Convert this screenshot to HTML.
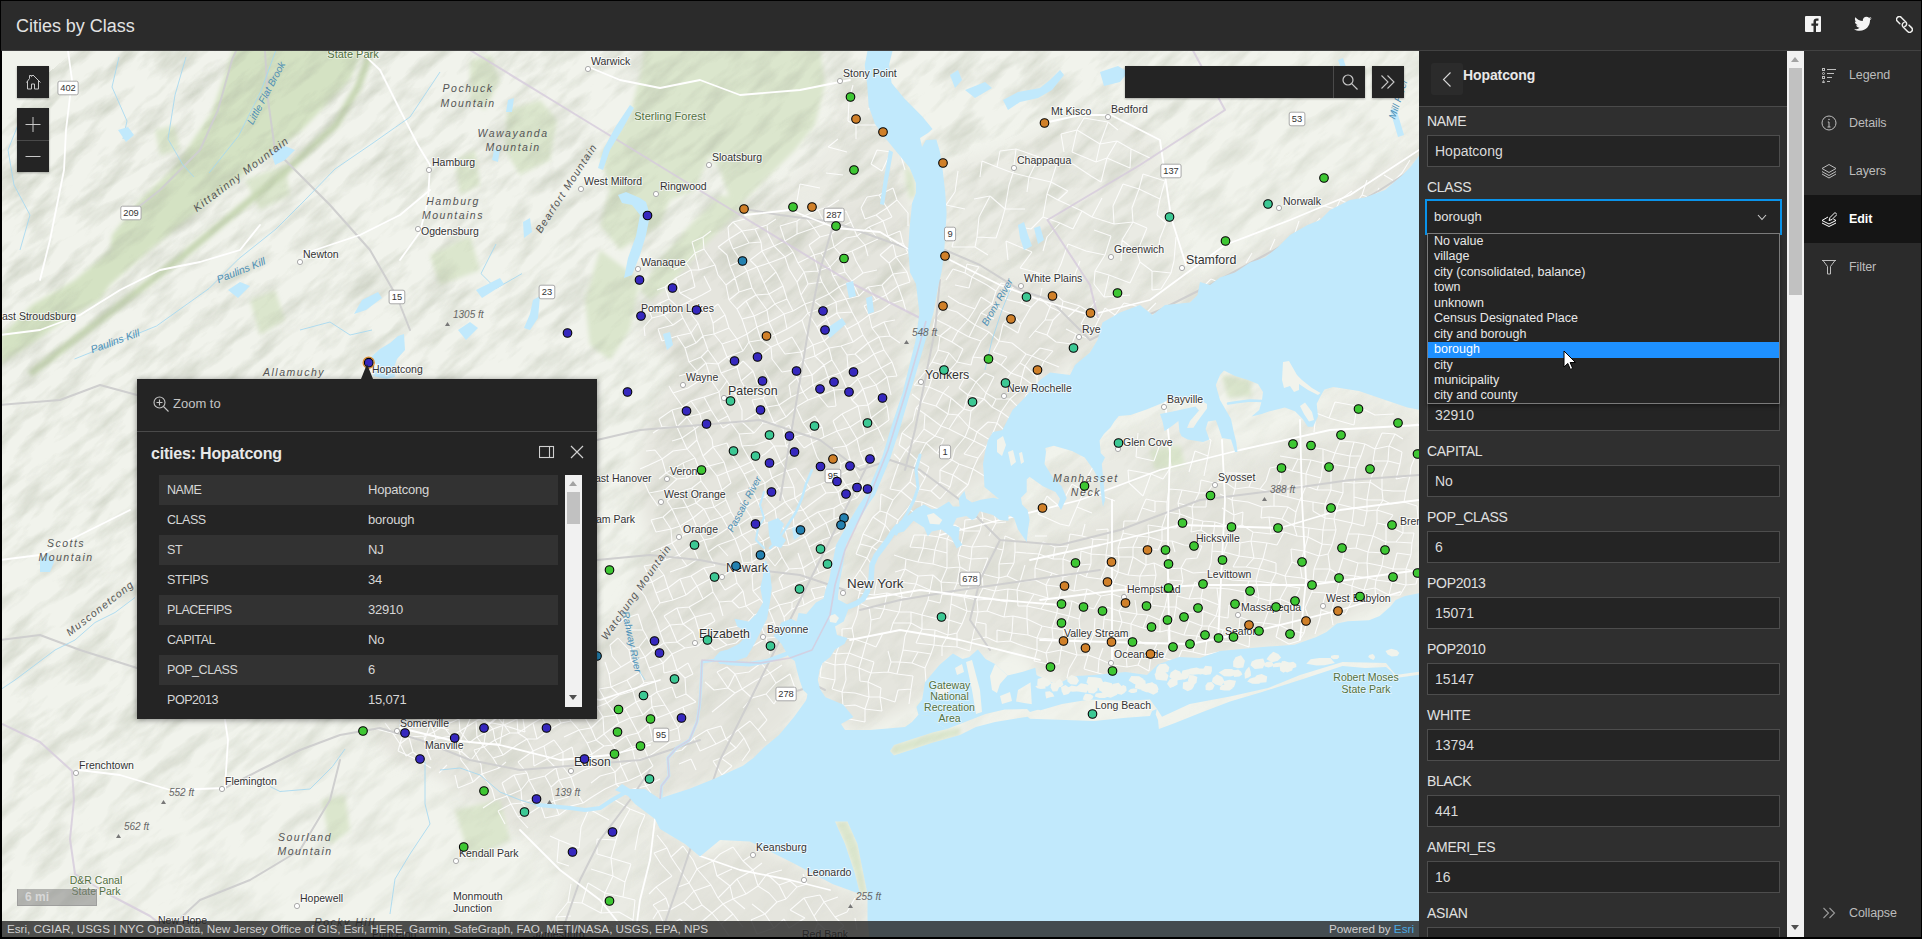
<!DOCTYPE html>
<html lang="en">
<head>
<meta charset="utf-8">
<title>Cities by Class</title>
<style>
*{box-sizing:border-box;margin:0;padding:0}
html,body{width:1922px;height:939px;overflow:hidden;background:#000}
body{font-family:"Liberation Sans",sans-serif;position:relative;color:#d6d6d6}
#app{position:absolute;left:2px;top:1px;width:1919px;height:936px;background:#2b2b2b;overflow:hidden}
#hdr{position:absolute;left:0;top:0;width:1919px;height:50px;background:#2b2b2b;border-bottom:1px solid #424242}
#hdr h1{position:absolute;left:14px;top:14px;font-size:18px;font-weight:400;color:#e3e3e3;line-height:22px;letter-spacing:-0.02px}
.hico{position:absolute;top:15px;width:16px;height:16px}
#map{position:absolute;left:0;top:50px;width:1417px;height:886px;overflow:hidden;background:#f1f3ec}
#map svg.base{position:absolute;left:0;top:0}
.mbtn{position:absolute;background:#242424;width:32px;height:32px;box-shadow:0 1px 2px rgba(0,0,0,.3)}
.mbtn svg{position:absolute;left:0;top:0}
#search{position:absolute;left:1123px;top:15px;width:240px;height:32px;background:#242424;box-shadow:0 1px 2px rgba(0,0,0,.3)}
#search .sb{position:absolute;right:0;top:0;width:32px;height:32px;border-left:1px solid #4a4a4a}
#scale{position:absolute;left:15px;top:838px;width:80px;height:17px;background:rgba(130,130,130,.55);border:1px solid rgba(150,150,150,.7);border-top:none;color:#d8d8d8;font-size:12px;font-weight:700;line-height:17px;padding-left:7px}
#attr{position:absolute;left:0;top:870px;width:1417px;height:16px;background:rgba(36,36,36,.8);color:#d1d1d1;font-size:11.7px;line-height:16px;white-space:nowrap}
#attr .l{position:absolute;left:5px;top:0;letter-spacing:-0.02px}
#attr .r{position:absolute;right:5px;top:0}
#attr .r b{font-weight:400;color:#4aa8e0}
/* popup */
#popup{position:absolute;left:135px;top:328px;width:460px;height:340px;background:#242424;box-shadow:0 1px 6px rgba(0,0,0,.45);color:#d6d6d6}
#popup .ptr{position:absolute;left:224px;top:-15px;width:0;height:0;border-left:6.2px solid transparent;border-right:6.2px solid transparent;border-bottom:15px solid #242424}
#popup .act{position:absolute;left:0;top:0;width:460px;height:53px;border-bottom:1px solid #4a4a4a;font-size:13px;color:#c4c4c4}
#popup .act span{position:absolute;left:36px;top:17px;line-height:16px}
#popup h2{position:absolute;left:14px;top:65px;font-size:16px;line-height:20px;color:#e8e8e8;font-weight:700;letter-spacing:-0.2px}
#ptab{position:absolute;left:22px;top:96px;width:399px;height:232px;overflow:hidden;font-size:13px}
#ptab div{height:30px;line-height:30px;position:relative;white-space:nowrap}
#ptab div:nth-child(odd){background:#323232}
#ptab div i{font-style:normal;position:absolute;left:8px;font-size:12.5px;letter-spacing:-.45px}
#ptab div u{text-decoration:none;position:absolute;left:209px;letter-spacing:-.2px}
#psb{position:absolute;left:428px;top:96px;width:17px;height:232px;background:#f1f1f1}
#psb .th{position:absolute;left:2px;top:17px;width:13px;height:32px;background:#c1c1c1}
.arr{position:absolute;left:4px;width:0;height:0;border-left:4.5px solid transparent;border-right:4.5px solid transparent}
.arr.up{border-bottom:5px solid #a3a3a3}
.arr.dn{border-top:5px solid #505050}
/* panel */
#panel{position:absolute;left:1417px;top:50px;width:368px;height:886px;background:#2f2f2f;overflow:hidden}
#phead{position:absolute;left:0;top:0;width:368px;height:56px;background:#242424;border-bottom:1px solid #4a4a4a}
#back{position:absolute;left:12px;top:12px;width:32px;height:32px;background:#2b2b2b;border-radius:3px}
#phead b{position:absolute;left:44px;top:15px;font-size:14px;line-height:18px;color:#e8e8e8;letter-spacing:-0.1px}
.fl{position:absolute;left:8px;font-size:14px;line-height:16px;color:#e0e0e0;letter-spacing:-0.3px}
.fi{position:absolute;left:8px;width:353px;height:32px;background:#242424;border:1px solid #4d4d4d;font-size:14px;line-height:30px;padding-left:7px;color:#dadada}
#sel{position:absolute;left:6px;top:148px;width:357px;height:36px;border:2px solid #0a93ea;background:#242424}
#sel span{position:absolute;left:7px;top:8px;font-size:13px;line-height:16px;color:#e4e4e4}
#dd{position:absolute;left:8px;top:182px;width:353px;height:171px;background:#242424;border:1px solid #7a7a7a;font-size:12.5px;color:#e8e8e8;box-shadow:0 2px 4px rgba(0,0,0,.4)}
#dd div{height:15.45px;line-height:15.45px;padding-left:6px;white-space:nowrap}
#dd div.hl{background:#1e90ff;color:#fff}
#vsb{position:absolute;left:1785px;top:50px;width:17px;height:886px;background:#f1f1f1}
#vsb .th{position:absolute;left:2px;top:17px;width:13px;height:227px;background:#c1c1c1}
/* nav */
#nav{position:absolute;left:1802px;top:50px;width:117px;height:886px;background:#2b2b2b;font-size:12.5px;color:#bdbdbd}
.ni{position:absolute;left:0;width:117px;height:48px}
.ni span{position:absolute;left:45px;top:16px;line-height:16px;letter-spacing:-0.1px}
.ni svg{position:absolute;left:17px;top:16px}
.ni.on{background:#151515;color:#fff;font-weight:700}
#cursor{position:absolute;left:1561px;top:349px}
</style>
</head>
<body>
<div style="position:absolute;left:1px;top:1px;width:1px;height:50px;background:#2b2b2b"></div>
<div id="app">
<div id="hdr"><h1>Cities by Class</h1>
<svg class="hico" style="left:1803px" viewBox="0 0 16 16"><rect width="16" height="16" rx="1" fill="#f4f4f4"/><path d="M11 16V9.8h2l.3-2.4H11V5.9c0-.7.2-1.2 1.2-1.2h1.3V2.6c-.2 0-1-.1-1.9-.1-1.9 0-3.1 1.1-3.1 3.2v1.7H6.4v2.4h2.1V16z" fill="#2b2b2b"/></svg>
<svg class="hico" style="left:1852px;width:18px" viewBox="0 0 18 16"><path d="M17.8 2.3c-.7.3-1.4.5-2.1.6.8-.5 1.3-1.2 1.6-2-.7.4-1.5.7-2.3.9C14.3 1.1 13.4.7 12.4.7c-2 0-3.6 1.6-3.6 3.6 0 .3 0 .6.1.8C5.9 5 3.2 3.5 1.4 1.3c-.3.5-.5 1.2-.5 1.8 0 1.3.6 2.4 1.6 3-.6 0-1.2-.2-1.6-.5 0 1.8 1.2 3.2 2.9 3.6-.3.1-.6.1-1 .1-.2 0-.5 0-.7-.1.5 1.4 1.8 2.5 3.4 2.5-1.2 1-2.8 1.6-4.5 1.6-.3 0-.6 0-.9-.1 1.6 1 3.5 1.6 5.6 1.6 6.7 0 10.3-5.5 10.3-10.3v-.5c.7-.5 1.3-1.1 1.8-1.7z" fill="#f4f4f4"/></svg>
<svg class="hico" style="left:1894px;top:15px;width:17px;height:17px" viewBox="0 0 17 17" fill="none" stroke="#f0f0ee" stroke-width="1.45" stroke-linecap="round"><g transform="translate(5.6 5.6) rotate(45)"><path d="M.3 2.75H-3.2A2.75 2.75 0 0 1-3.2-2.75H3.2A2.75 2.75 0 0 1 5.7 1.2"/></g><g transform="translate(11.3 11.3) rotate(45)"><path d="M-.3-2.75H3.2A2.75 2.75 0 0 1 3.2 2.75H-3.2A2.75 2.75 0 0 1-5.7-1.2"/></g></svg>
</div>
<div id="map">
<svg class="base" width="1417" height="886" viewBox="0 0 1417 886" font-family="Liberation Sans, sans-serif">
<rect width="1417" height="886" fill="#f1f3ec"/>
<defs><filter id="bl" x="-10%" y="-10%" width="120%" height="120%"><feGaussianBlur stdDeviation="7"/></filter><filter id="bg" x="-10%" y="-10%" width="120%" height="120%"><feGaussianBlur stdDeviation="2.2"/></filter><filter id="hs" x="0" y="0" width="100%" height="100%"><feTurbulence type="fractalNoise" baseFrequency=".02 .07" numOctaves="4" seed="11"/><feColorMatrix type="matrix" values="0 0 0 0 .42 0 0 0 0 .46 0 0 0 0 .36 1.1 0 0 0 -.47"/></filter><linearGradient id="fg" x1="0" y1="0" x2="1" y2="1"><stop offset="0" stop-color="#fff"/><stop offset=".45" stop-color="#fff" stop-opacity=".75"/><stop offset=".75" stop-color="#fff" stop-opacity=".15"/><stop offset="1" stop-color="#fff" stop-opacity=".1"/></linearGradient><mask id="fm"><rect width="1417" height="886" fill="url(#fg)"/></mask></defs>
<g fill="#e5e5de" filter="url(#bl)"><polygon points="698,174 758,164 828,149 903,129 910,179 910,249 898,339 878,404 848,479 828,549 798,561 784,601 738,609 700,609 697,653 694,671 686,689 674,697 665,707 666,725 658,735 658,749 598,749 558,764 518,784 478,759 438,724 388,704 368,674 418,664 478,664 558,649 595,639 598,589 628,549 648,489 634,429 648,369 678,314 638,284 648,244 678,211"/><polygon points="943,199 973,211 998,224 1043,231 1098,249 1188,237 1258,197 1328,147 1417,97 1417,121 1348,164 1288,194 1208,244 1108,279 1038,339 988,429 898,484 858,549 841,546 863,469 898,379 923,289 938,234"/><polygon points="843,549 898,489 988,449 1028,494 1108,461 1178,433 1258,411 1338,381 1417,371 1417,541 1378,551 1298,591 1188,611 1098,636 1038,621 1018,599 988,599 948,604 913,654 858,679 838,674 818,639 818,609 848,564"/><polygon points="702,611 787,606 798,639 792,666 761,697 741,715 713,727 688,738 662,746 667,725 666,707 675,697 688,689 695,671 698,653 699,633"/><polygon points="653,768 698,805 748,791 830,833 864,849 866,886 638,886 646,819"/></g>
<g fill="#e5e5de" opacity=".55" filter="url(#bl)"><polygon points="1028,494 1043,419 1098,399 1158,364 1238,399 1298,374 1338,341 1417,361 1417,371 1338,381 1258,411 1178,433 1108,461"/><polygon points="943,114 998,99 1058,69 1118,59 1158,89 1173,169 1188,237 1098,249 1043,231 998,224 943,199"/><polygon points="743,164 828,149 903,129 903,69 866,39 838,29 828,89 798,119"/><polygon points="368,674 418,664 478,664 558,649 595,639 595,669 518,689 438,724 388,704"/><polygon points="518,784 558,764 598,749 658,749 653,768 646,819 638,886 538,886 558,829"/></g>
<g fill="#dbe6cd" filter="url(#bg)"><polygon points="643,-6 818,-6 823,34 813,74 793,99 743,149 728,149 718,119 708,104 693,139 668,149 658,174 618,199 598,174 608,139 598,104 628,64 638,24"/><polygon points="743,149 733,164 698,199 668,234 648,249 638,239 658,209 688,174 718,144"/><polygon points="505,59 538,49 555,69 548,109 518,124 503,99"/><polygon points="468,9 488,4 498,29 483,59 468,49"/><polygon points="453,109 473,99 478,134 458,144"/><polygon points="428,204 468,184 478,219 438,234"/><polygon points="248,249 273,239 283,269 258,284"/><polygon points="153,79 173,74 178,99 158,104"/><polygon points="243,129 283,114 288,144 258,159"/><polygon points="598,199 638,229 628,279 608,309 588,294 583,249"/><polygon points="903,114 912,124 914,144 908,149 904,134"/><polygon points="928,239 934,241 923,289 916,287"/><polygon points="320,749 343,744 348,779 328,794"/><polygon points="453,759 498,749 508,789 468,809"/><polygon points="1128,329 1153,319 1163,344 1138,354"/><polygon points="1220,324 1248,329 1250,345 1226,347"/><polygon points="1148,399 1178,394 1183,414 1153,419"/><polygon points="915,655 923,649 935,661 934,673 924,671"/><polygon points="892,694 930.4,681.5 958,676 958,684 930.4,691.7 892,704.5 888,700"/><polygon points="833,770 845.5,770 855.5,793 860.5,818 865,843 858,843 853,823 843,793"/></g>
<polygon points="-2,286 30,254 73,229 108,199 110,184 138,149 173,116 210,61 223,24 233,-6 273,-6 363,-6 358,6 348,29 298,81 248,119 198,159 148,199 108,234 98,249 60,271 28,294 -2,314" fill="#d4e2c3" filter="url(#bg)"/>
<polyline points="28,323 46.5,308.7 110,260 177,208 222,170.6 281.6,122 334,73.6 356,36 371,-6" fill="none" stroke="#c6d6b2" stroke-width="7" filter="url(#bg)"/>
<g mask="url(#fm)"><rect x="-600" y="-300" width="2400" height="1800" filter="url(#hs)" transform="rotate(-40 700 440)"/></g>
<path d="M383 672L392 684M392 684L399 681M392 684L398 693M398 693L407 686M398 693L404 705M404 705L411 701M399 681L416 673M407 686L422 685M407 686L411 701M411 701L422 710M416 673L425 666M422 685L432 681M422 685L423 694M423 694L434 688M423 694L429 709M437 722L445 714M425 666L432 681M432 681L441 675M432 681L434 688M434 688L449 685M443 698L456 693M453 724L456 737M456 737L471 731M441 675L457 668M441 675L449 685M449 685L458 680M456 693L459 709M459 709L466 718M466 718L471 731M471 731L480 723M481 757L493 749M457 668L458 680M458 680L474 670M458 680L467 692M467 692L475 686M472 699L482 696M472 699L479 714M479 714L480 723M480 723L497 717M480 723L490 738M490 738L493 749M493 749L505 745M496 760L509 753M496 760L503 773M474 670L481 667M474 670L475 686M475 686L491 678M475 686L482 696M482 696L493 689M482 696L491 707M491 707L501 704M491 707L497 717M497 717L504 711M500 732L512 724M500 732L505 745M505 745L519 739M505 745L509 753M509 753L520 752M509 753L516 766M516 766L528 762M516 766L526 777M481 667L492 662M481 667L491 678M491 678L502 674M491 678L493 689M493 689L508 682M493 689L501 704M501 704L515 694M512 724L525 722M512 724L519 739M519 739L527 729M519 739L520 752M520 752L536 746M520 752L528 762M528 762L539 755M492 662L502 674M502 674L515 668M502 674L508 682M508 682L516 682M515 694L525 688M516 711L531 700M516 711L525 722M525 722L527 729M527 729L543 725M527 729L536 746M536 746L539 755M539 755L552 750M539 755L543 767M543 767L557 764M515 668L523 659M515 668L516 682M516 682L531 672M516 682L525 688M525 688L535 688M525 688L531 700M531 700L542 695M531 700L532 715M532 715L545 708M543 725L554 717M543 725L549 736M549 736L557 729M549 736L552 750M552 750L566 746M552 750L557 764M557 764L569 755M523 659L535 654M531 672L540 667M531 672L535 688M535 688L547 679M542 695L552 689M542 695L545 708M545 708L561 701M545 708L554 717M554 717L561 716M554 717L557 729M557 729L569 726M557 729L566 746M566 746L573 738M569 755L581 752M535 654L544 652M535 654L540 667M540 667L547 679M547 679L559 672M552 689L561 701M561 701L570 696M561 701L561 716M561 716L569 726M569 726L580 720M569 726L573 738M573 738L581 752M581 752L590 746M544 652L555 665M555 665L562 656M555 665L559 672M559 672L569 670M562 686L577 679M570 696L573 709M573 709L590 703M580 720L590 716M589 732L598 725M590 746L603 738M562 656L573 649M562 656L569 670M569 670L577 679M577 679L589 677M577 679L585 692M585 692L594 689M585 692L590 703M590 703L602 695M590 703L590 716M590 716L604 710M598 725L613 721M603 738L614 733M573 649L582 665M582 665L595 656M582 665L589 677M589 677L601 666M589 677L594 689M594 689L602 683M594 689L602 695M602 695L611 694M604 710L616 703M604 710L613 721M613 721L619 715M613 721L614 733M614 733L626 730M614 733L624 743M624 743L631 738M590 644L595 656M595 656L605 652M595 656L601 666M601 666L614 664M601 666L602 683M602 683L617 672M602 683L611 694M611 694L624 685M611 694L616 703M616 703L630 696M616 703L619 715M619 715L633 709M619 715L626 730M626 730L639 724M631 738L644 735M597 638L609 636M597 638L605 652M605 652L617 644M605 652L614 664M614 664L623 658M614 664L617 672M617 672L628 667M624 685L636 682M624 685L630 696M630 696L641 694M630 696L633 709M633 709L646 706M633 709L639 724M639 724L651 715M639 724L644 735M644 735L658 728M644 735L649 742M603 611L607 623M607 623L619 616M607 623L609 636M609 636L625 629M609 636L617 644M617 644L631 640M623 658L634 651M623 658L628 667M628 667L641 664M628 667L636 682M636 682L647 673M636 682L641 694M641 694L651 690M641 694L646 706M646 706L656 699M646 706L651 715M608 594L616 587M608 594L610 605M610 605L619 616M619 616L629 610M625 629L638 621M625 629L631 640M631 640L642 632M631 640L634 651M634 651L649 645M634 651L641 664M641 664L650 656M647 673L655 667M647 673L651 690M656 699L668 691M612 576L622 568M616 587L627 599M627 599L637 596M627 599L629 610M629 610L643 606M629 610L638 621M638 621L642 632M642 632L653 630M649 645L655 641M649 645L650 656M650 656L663 654M650 656L655 667M655 667L668 662M664 681L676 677M668 691L678 689M622 568L636 563M622 568L629 579M629 579L641 579M637 596L645 586M637 596L643 606M643 606L651 599M643 606L647 617M647 617L661 612M647 617L653 630M653 630L655 641M655 641L670 636M655 641L663 654M663 654L668 662M668 662L681 656M668 662L676 677M676 677L684 667M676 677L678 689M636 563L641 579M641 579L645 586M645 586L651 599M651 599L662 592M651 599L661 612M661 612L670 603M661 612L662 622M662 622L675 619M670 636L674 647M674 647L684 643M681 656L694 651M681 656L684 667M635 535L650 531M635 535L643 545M643 545L650 561M650 561L658 552M650 561L654 569M654 569L658 581M658 581L668 574M658 581L662 592M662 592L675 591M662 592L670 603M670 603L683 597M670 603L675 619M675 619L686 612M675 619L683 627M683 627L691 623M683 627L684 643M684 643L694 651M642 515L653 513M642 515L650 531M650 531L662 524M650 531L654 542M654 542L666 537M654 542L658 552M658 552L671 549M662 565L675 557M662 565L668 574M668 574L681 573M668 574L675 591M675 591L691 581M675 591L683 597M683 597L696 595M686 612L691 623M649 501L659 497M653 513L664 509M653 513L662 524M662 524L666 537M666 537L678 528M666 537L671 549M671 549L684 544M675 557L687 556M675 557L681 573M681 573L693 566M681 573L691 581M691 581L696 595M696 595L702 589M649 469L661 466M649 469L654 481M654 481L669 478M659 497L670 492M659 497L664 509M664 509L677 504M668 521L685 515M678 528L689 525M678 528L684 544M684 544L695 535M687 556L701 548M687 556L693 566M693 566L709 562M693 566L697 580M697 580L713 570M697 580L702 589M702 589L715 586M702 589L713 599M713 599L725 594M638 418L647 414M641 428L647 442M647 442L663 439M647 442L656 455M661 466L670 458M661 466L669 478M669 478L678 475M669 478L670 492M670 492L682 484M670 492L677 504M677 504L690 494M677 504L685 515M685 515L696 508M689 525L702 517M689 525L695 535M695 535L708 528M695 535L701 548M701 548L711 541M709 562L713 570M715 586L727 577M715 586L725 594M725 594L734 592M731 606L742 600M644 400L653 399M647 414L660 408M657 428L664 422M663 439L675 428M665 450L677 441M665 450L670 458M670 458L685 456M670 458L678 475M678 475L691 467M678 475L682 484M682 484L696 479M690 494L702 489M690 494L696 508M702 517L713 515M702 517L708 528M708 528L716 528M708 528L711 541M711 541L717 551M717 551L730 550M717 551L721 565M727 577L743 574M734 592L746 581M651 382L660 376M653 399L660 408M660 408L671 400M660 408L664 422M664 422L681 412M664 422L675 428M675 428L685 427M677 441L690 437M677 441L685 456M685 456L694 452M685 456L691 467M691 467L702 458M691 467L696 479M696 479L708 470M696 479L702 489M702 489L711 487M702 489L706 501M706 501L716 494M706 501L713 515M716 528L732 518M716 528L723 539M723 539L735 532M730 550L741 540M730 550L737 557M737 557L744 555M743 574L752 564M743 574L746 581M746 581L759 575M746 581L751 595M751 595L764 587M657 368L670 359M657 368L660 376M660 376L675 376M670 390L680 387M671 400L685 398M681 412L693 407M681 412L685 427M685 427L697 418M690 437L699 430M690 437L694 452M694 452L707 441M694 452L702 458M702 458L712 456M702 458L708 470M708 470L720 466M711 487L726 477M716 494L733 488M716 494L726 505M732 518L741 512M732 518L735 532M735 532L741 540M741 540L744 555M744 555L758 548M744 555L752 564M752 564L767 559M759 575L772 571M759 575L764 587M764 587L777 586M764 587L768 603M670 359L681 356M670 359L675 376M675 376L685 366M675 376L680 387M680 387L693 378M680 387L685 398M685 398L695 389M685 398L693 407M693 407L697 418M697 418L707 415M697 418L699 430M699 430L707 441M707 441L720 439M707 441L712 456M712 456L724 449M712 456L720 466M720 466L729 461M720 466L726 477M726 477L737 474M726 477L733 488M733 488L740 484M733 488L738 501M738 501L749 494M738 501L741 512M741 512L750 511M750 524L756 518M750 524L751 540M751 540L761 534M751 540L758 548M758 548L767 559M767 559L777 554M767 559L772 571M772 571L777 586M777 586L784 580M642 276L650 267M642 276L643 285M667 335L671 342M671 342L686 337M671 342L681 356M681 356L689 350M681 356L685 366M685 366L698 363M685 366L693 378M693 378L700 372M693 378L695 389M695 389L701 405M701 405L711 396M701 405L707 415M707 415L722 411M707 415L715 425M715 425L725 421M715 425L720 439M720 439L729 432M720 439L724 449M724 449L729 461M729 461L737 474M737 474L749 466M737 474L740 484M740 484L752 478M740 484L749 494M749 494L761 490M749 494L750 511M750 511L763 503M750 511L756 518M770 542L781 538M770 542L777 554M777 554L790 551M777 554L782 566M782 566L790 558M782 566L784 580M647 259L658 252M647 259L650 267M650 267L662 264M656 278L671 274M656 278L660 290M660 290L675 285M677 325L695 320M686 337L697 330M689 350L702 346M689 350L698 363M698 363L709 359M698 363L700 372M700 372L710 388M710 388L711 396M711 396L725 392M711 396L722 411M722 411L725 421M725 421L738 416M725 421L729 432M735 442L749 437M735 442L743 457M743 457L755 449M743 457L749 466M749 466L762 465M749 466L752 478M752 478L763 472M752 478L761 490M761 490L771 484M761 490L763 503M763 503L775 495M763 503L773 515M773 515L780 506M777 527L787 518M777 527L781 538M781 538L792 533M790 551L800 545M790 551L790 558M790 558L802 554M655 239L663 236M658 252L667 248M658 252L662 264M662 264L676 256M662 264L671 274M671 274L681 267M675 285L689 282M675 285L683 297M683 297L694 292M683 297L687 311M687 311L699 306M687 311L695 320M695 320L704 312M695 320L697 330M697 330L709 329M702 346L717 341M702 346L709 359M709 359L716 370M716 370L726 365M716 370L721 377M721 377L729 372M725 392L729 403M729 403L738 416M738 416L749 411M738 416L742 423M742 423L753 418M742 423L749 437M749 437L763 432M749 437L755 449M755 449L763 446M755 449L762 465M762 465L773 458M762 465L763 472M763 472L775 471M771 484L775 495M775 495L787 494M775 495L780 506M780 506L787 518M787 518L801 517M792 533L804 529M792 533L800 545M800 545L802 554M802 554L813 548M663 236L674 227M663 236L667 248M667 248L676 256M676 256L690 249M676 256L681 267M681 267L689 282M689 282L696 272M689 282L694 292M694 292L701 285M699 306L706 299M699 306L704 312M704 312L716 313M704 312L709 329M709 329L717 341M717 341L725 330M717 341L719 353M719 353L726 365M726 365L729 372M729 372L740 371M729 372L737 383M737 383L752 382M737 383L740 395M740 395L753 394M740 395L749 411M749 411L763 403M749 411L753 418M753 418L763 432M763 432L770 427M763 432L763 446M763 446L777 437M763 446L773 458M773 458L783 451M773 458L775 471M775 471L791 461M775 471L783 479M783 479L792 476M783 479L787 494M787 494L803 486M796 502L801 517M801 517L812 510M801 517L804 529M804 529L817 522M809 538L823 535M809 538L813 548M813 548L827 544M672 219L684 212M674 227L689 219M674 227L678 242M678 242L693 236M678 242L690 249M690 249L700 244M689 263L707 260M689 263L696 272M696 272L701 285M701 285L712 283M701 285L706 299M706 299L716 313M716 313L725 306M716 313L719 322M719 322L735 316M719 322L725 330M725 330L733 343M733 343L745 340M733 343L740 359M740 359L740 371M740 371L755 362M740 371L752 382M752 382L761 372M753 394L767 389M763 403L772 395M767 417L779 411M767 417L770 427M770 427L785 420M770 427L777 437M777 437L792 436M777 437L783 451M783 451L793 447M783 451L791 461M791 461L801 459M791 461L792 476M792 476L806 467M792 476L803 486M803 486L813 478M803 486L807 496M807 496L820 489M807 496L812 510M812 510L822 503M812 510L817 522M817 522L832 516M823 535L827 544M684 212L693 202M684 212L689 219M689 219L697 219M689 219L693 236M700 244L709 239M707 260L716 253M707 260L711 272M711 272L723 264M711 272L712 283M712 283L727 277M712 283L720 293M720 293L735 288M720 293L725 306M725 306L741 300M725 306L735 316M735 316L741 310M735 316L739 330M739 330L751 320M739 330L745 340M750 349L761 347M750 349L755 362M755 362L765 356M755 362L761 372M761 372L772 372M767 389L772 395M772 395L784 395M772 395L779 411M779 411L791 401M779 411L785 420M785 420L794 417M785 420L792 436M792 436L793 447M793 447L808 437M793 447L801 459M801 459L813 450M801 459L806 467M806 467L816 461M806 467L813 478M813 478L824 472M820 489L829 486M820 489L822 503M822 503L836 495M832 516L838 509M690 191L701 186M690 191L693 202M693 202L702 198M693 202L697 219M697 219L713 214M702 225L709 239M716 253L723 264M723 264L727 277M727 277L735 288M735 288L745 283M735 288L741 300M741 300L747 291M741 310L751 320M751 320L756 334M761 347L770 338M761 347L765 356M765 356L777 354M765 356L772 372M772 372L784 366M772 372L781 378M781 378L787 374M781 378L784 395M784 395L793 386M784 395L791 401M794 417L803 430M803 430L808 437M808 437L819 433M813 450L824 442M816 461L832 457M816 461L824 472M824 472L832 468M824 472L829 486M829 486L838 481M836 495L838 509M701 186L709 180M701 186L702 198M702 198L713 214M713 214L716 224M716 224L724 234M724 234L733 227M724 234L727 249M727 249L737 241M727 249L735 258M735 258L744 250M735 258L740 268M740 268L752 265M740 268L745 283M745 283L755 276M745 283L747 291M747 291L759 289M747 291L755 307M755 307L769 296M762 319L768 330M768 330L770 338M770 338L777 354M777 354L789 346M777 354L784 366M784 366L794 356M787 374L793 386M793 386L808 382M793 386L802 397M802 397L810 392M815 419L823 418M819 433L828 429M819 433L824 442M824 442L836 441M832 457L839 453M832 457L832 468M832 468L846 463M716 196L727 188M716 196L725 204M725 204L728 215M728 215L739 210M728 215L733 227M733 227L745 220M733 227L737 241M737 241L750 237M744 250L754 244M744 250L752 265M752 265L765 259M752 265L755 276M755 276L767 271M755 276L759 289M759 289L773 284M759 289L769 296M769 296L776 293M769 296L770 308M770 308L780 321M780 321L792 319M787 334L795 327M787 334L789 346M789 346L801 341M794 356L806 349M794 356L801 372M801 372L813 365M801 372L808 382M808 382L820 376M808 382L810 392M810 392L822 386M810 392L815 406M815 406L823 418M823 418L828 429M828 429L838 424M828 429L836 441M836 441L844 434M836 441L839 453M839 453L855 447M839 453L846 463M726 176L731 171M726 176L727 188M727 188L740 180M727 188L731 198M731 198L747 192M731 198L739 210M739 210L745 220M745 220L755 216M745 220L750 237M750 237L754 244M754 244L767 243M754 244L765 259M765 259L773 253M765 259L767 271M767 271L782 263M767 271L773 284M773 284L785 278M773 284L776 293M776 293L790 286M776 293L783 303M783 303L799 301M792 319L801 309M792 319L795 327M795 327L810 324M795 327L801 341M801 341L811 334M801 341L806 349M806 349L817 345M813 365L820 376M820 376L822 386M822 386L835 380M831 397L844 395M831 397L839 413M839 413L848 408M839 413L838 424M838 424L852 417M838 424L844 434M844 434L859 430M844 434L855 447M855 447L861 438M731 171L743 168M731 171L740 180M740 180L753 178M740 180L747 192M747 192L759 191M748 209L760 200M748 209L755 216M755 216L767 212M755 216L762 232M762 232L774 221M762 232L767 243M767 243L781 235M767 243L773 253M773 253L785 248M773 253L782 263M782 263L791 260M782 263L785 278M785 278L800 269M790 286L799 301M799 301L811 294M799 301L801 309M801 309L813 305M801 309L810 324M810 324L822 314M810 324L811 334M811 334L826 326M811 334L817 345M817 345L832 339M817 345L826 356M826 356L834 355M831 370L840 363M831 370L835 380M835 380L848 376M835 380L844 395M844 395L855 388M844 395L848 408M848 408L852 417M852 417L863 413M852 417L859 430M859 430L861 438M753 178L765 174M753 178L759 191M759 191L760 200M760 200L772 195M760 200L767 212M767 212L783 206M767 212L774 221M774 221L781 235M781 235L785 248M785 248L791 260M791 260L803 253M800 269L806 262M800 269L805 284M805 284L811 294M811 294L822 290M811 294L813 305M813 305L827 297M813 305L822 314M822 314L830 309M822 314L826 326M826 326L838 322M826 326L832 339M832 339L845 338M832 339L834 355M840 363L856 355M840 363L848 376M848 376L859 369M848 376L855 388M855 388L863 383M855 388L858 401M858 401L870 396M858 401L863 413M863 413L874 406M765 174L774 168M765 174L766 183M766 183L772 195M772 195L783 190M772 195L783 206M783 206L791 201M783 206L787 218M787 218L795 231M795 231L802 221M795 231L799 244M799 244L806 233M799 244L803 253M803 253L812 250M803 253L806 262M806 262L821 257M806 262L815 276M815 276L825 268M815 276L822 290M822 290L831 282M822 290L827 297M827 297L839 295M827 297L830 309M830 309L838 322M838 322L846 317M838 322L845 338M845 338L856 328M845 338L850 349M850 349L861 338M850 349L856 355M856 355L866 354M856 355L859 369M859 369L863 383M863 383L876 377M870 396L874 406M778 175L795 170M778 175L783 190M783 190L795 183M783 190L791 201M791 201L796 212M796 212L812 204M796 212L802 221M802 221L816 220M802 221L806 233M806 233L820 231M812 250L827 243M812 250L821 257M821 257L834 251M821 257L825 268M825 268L835 262M825 268L831 282M839 295L851 291M839 295L845 304M845 304L853 303M845 304L846 317M846 317L861 311M846 317L856 328M856 328L866 324M856 328L861 338M861 338L874 334M861 338L866 354M866 354L878 344M866 354L869 367M869 367L885 355M869 367L876 377M876 377L887 369M876 377L882 390M795 170L802 165M795 170L795 183M795 183L812 177M807 194L818 186M807 194L812 204M812 204L819 202M812 204L816 220M816 220L828 216M816 220L820 231M820 231L827 243M827 243L837 236M827 243L834 251M834 251L844 248M834 251L835 262M835 262L850 261M835 262L845 278M845 278L856 272M845 278L851 291M851 291L861 284M853 303L866 292M853 303L861 311M861 311L872 303M866 324L879 317M866 324L874 334M874 334L885 326M874 334L878 344M878 344L885 355M885 355L887 369M802 165L816 159M802 165L812 177M812 177L823 173M812 177L818 186M818 186L829 183M819 202L832 196M819 202L828 216M828 216L839 204M828 216L831 225M831 225L843 221M831 225L837 236M837 236L850 230M837 236L844 248M844 248L857 245M844 248L850 261M850 261L856 272M856 272L867 264M856 272L861 284M861 284L866 292M866 292L877 286M866 292L872 303M872 303L882 299M872 303L879 317M879 317L890 311M879 317L885 326M885 326L895 325M885 326L889 344M816 159L826 156M816 159L823 173M823 173L832 164M829 183L839 176M829 183L832 196M832 196L844 187M832 196L839 204M839 204L850 200M839 204L843 221M843 221L850 230M850 230L861 222M850 230L857 245M857 245L866 236M862 255L874 249M862 255L867 264M867 264L880 259M867 264L870 277M870 277L882 271M870 277L877 286M877 286L888 285M877 286L882 299M882 299L890 311M890 311L895 325M826 156L837 149M832 164L844 160M832 164L839 176M839 176L849 171M844 187L855 185M850 200L863 194M850 200L854 210M854 210L861 222M861 222L875 219M866 236L880 234M866 236L874 249M874 249L884 244M880 259L888 253M882 271L893 269M882 271L888 285M888 285L898 292M844 160L849 171M849 171L855 185M855 185L867 176M855 185L863 194M863 194L876 188M863 194L866 205M880 234L891 223M880 234L884 244M884 244L896 235M884 244L888 253M888 253L901 249M859 157L865 146M859 157L863 168M863 168L874 164M867 176L881 170M867 176L876 188M878 204L891 193M878 204L887 212M887 212L894 206M887 212L891 223M891 223L905 221M891 223L896 235M896 235L908 231M896 235L901 249M901 249L904 260M865 146L877 144M874 164L885 157M874 164L881 170M881 170L890 166M881 170L886 185M886 185L898 180M886 185L891 193M891 193L901 192M891 193L894 206M894 206L906 202M894 206L905 221M905 221L908 231M877 144L891 137M877 144L885 157M885 157L895 149M885 157L890 166M898 180L901 192M901 192L906 202M891 137L895 149M895 149L906 162M906 162L906 175M951 218L963 222M951 218L944 229M965 213L977 216M965 213L963 222M963 222L970 226M953 234L967 237M946 245L957 252M941 257L955 261M941 257L933 268M933 268L949 276M933 268L930 282M930 282L938 285M977 216L970 226M970 226L985 234M970 226L967 237M957 252L973 258M955 261L966 269M949 276L956 280M949 276L938 285M938 285L950 291M938 285L936 299M936 299L947 302M936 299L930 311M930 311L941 314M930 311L923 321M923 321L930 327M923 321L912 334M912 334L927 336M910 343L920 351M985 234L994 240M979 246L990 253M979 246L973 258M973 258L966 269M966 269L973 274M966 269L956 280M956 280L967 286M956 280L950 291M950 291L961 298M947 302L955 311M947 302L941 314M941 314L948 319M941 314L930 327M930 327L927 336M927 336L941 342M927 336L920 351M920 351L934 355M920 351L914 357M914 357L923 363M914 357L911 370M911 370L900 382M900 382L913 390M900 382L897 394M897 394L904 399M892 403L898 409M999 232L1012 235M999 232L994 240M994 240L990 253M990 253L1002 260M990 253L979 262M979 262L992 268M979 262L973 274M973 274L987 281M973 274L967 286M967 286L979 290M961 298L955 311M955 311L969 314M955 311L948 319M948 319L964 324M947 335L941 342M941 342L949 347M941 342L934 355M934 355L946 363M923 363L939 375M923 363L922 378M922 378L933 385M922 378L913 390M913 390L924 392M913 390L904 399M904 399L915 409M904 399L898 409M898 409L894 420M894 420L888 438M888 438L899 440M879 443L891 449M879 443L878 460M878 460L885 462M878 460L871 466M871 466L883 474M871 466L861 483M861 483L877 490M861 483L858 493M858 493L870 496M858 493L854 503M854 503L865 507M1012 235L1024 243M1012 235L1003 248M1003 248L1019 252M1002 260L1010 263M987 281L997 290M987 281L979 290M979 290L971 306M971 306L989 308M971 306L969 314M964 324L974 331M964 324L957 337M957 337L966 344M949 347L962 358M949 347L946 363M946 363L956 364M946 363L939 375M939 375L947 378M939 375L933 385M933 385L942 388M933 385L924 392M924 392L935 402M924 392L915 409M915 409L927 416M915 409L912 416M912 416L923 427M912 416L908 431M908 431L917 438M908 431L899 440M899 440L911 450M899 440L891 449M891 449L885 462M885 462L896 469M885 462L883 474M883 474L891 484M883 474L877 490M877 490L884 492M877 490L870 496M870 496L878 501M870 496L865 507M865 507L871 515M865 507L858 519M858 519L865 528M858 519L847 535M847 535L858 540M1024 243L1019 252M1019 252L1029 256M1010 263L1019 273M1010 263L1001 273M1001 273L1016 282M1001 273L997 290M997 290L1010 292M997 290L991 301M991 301L1005 306M989 308L999 314M983 322L992 326M983 322L974 331M974 331L984 342M974 331L966 344M966 344L982 348M966 344L962 358M962 358L969 360M962 358L956 364M956 364L967 376M956 364L947 378M947 378L963 386M942 388L935 402M935 402L950 409M927 416L923 427M923 427L917 438M917 438L929 440M917 438L911 450M911 450L920 451M911 450L906 457M906 457L919 467M906 457L896 469M896 469L891 484M891 484L884 492M884 492L878 501M878 501L871 515M865 528L858 540M858 540L856 548M1040 237L1038 247M1038 247L1048 256M1038 247L1029 256M1029 256L1019 273M1019 273L1016 282M1010 292L1024 303M1005 306L999 314M999 314L1009 322M992 326L984 342M984 342L994 348M984 342L982 348M982 348L990 356M982 348L969 360M969 360L967 376M967 376L975 381M967 376L963 386M963 386L972 390M963 386L953 398M953 398L950 409M950 409L957 413M950 409L938 419M938 419L951 424M938 419L938 431M938 431L948 436M938 431L929 440M929 440L938 448M920 451L936 458M920 451L919 467M1053 243L1061 250M1053 243L1048 256M1048 256L1059 261M1048 256L1043 269M1043 269L1051 269M1043 269L1033 280M1033 280L1045 284M1033 280L1027 287M1024 303L1030 305M1024 303L1018 312M1018 312L1023 315M1018 312L1009 322M1009 322L1020 326M1009 322L1000 334M1000 334L1017 340M994 348L1008 348M994 348L990 356M990 356L999 361M986 371L995 372M986 371L975 381M975 381L988 389M975 381L972 390M972 390L984 396M972 390L962 403M962 403L976 407M957 413L971 418M957 413L951 424M951 424L966 434M951 424L948 436M948 436L938 448M1061 250L1078 255M1061 250L1059 261M1059 261L1066 266M1059 261L1051 269M1051 269L1045 284M1045 284L1054 291M1038 297L1051 300M1038 297L1030 305M1030 305L1042 310M1030 305L1023 315M1023 315L1035 326M1023 315L1020 326M1020 326L1035 337M1020 326L1017 340M1017 340L1008 348M1008 348L1020 360M1008 348L999 361M999 361L1014 372M999 361L995 372M995 372L1006 383M995 372L988 389M988 389L1000 391M988 389L984 396M984 396L994 402M984 396L976 407M976 407L971 418M971 418L984 426M971 418L966 434M966 434L955 445M1078 255L1086 260M1078 255L1066 266M1064 278L1074 283M1054 291L1070 293M1051 300L1042 310M1042 310L1057 316M1042 310L1035 326M1035 326L1035 337M1035 337L1024 344M1024 344L1020 360M1020 360L1014 372M1014 372L1006 383M1006 383L1000 391M1000 391L994 402M994 402L985 417M985 417L984 426M1094 250L1086 260M1086 260L1097 268M1086 260L1079 273M1079 273L1092 278M1074 283L1085 287M1074 283L1070 293M1103 257L1113 264M1103 257L1097 268M1097 268L1092 278M1122 252L1134 255M1122 252L1113 264M1113 264L1127 268M1113 264L1108 271M1134 255L1144 262M1154 252L1144 262M1209 228L1224 234M1209 228L1202 235M1250 202L1244 212M1273 188L1268 199M1297 170L1293 182M1322 155L1334 158M1318 167L1309 178M1350 140L1338 149M1338 149L1352 155M1338 149L1334 158M1334 158L1329 169M1365 129L1360 144M1360 144L1372 148M1360 144L1352 155M1382 124L1392 130M1377 137L1372 148M1408 109L1400 122M1400 122L1392 130M825 600L834 603M825 600L820 610M820 610L833 614M820 610L818 626M818 626L833 629M840 578L850 577M840 578L840 587M840 587L852 588M840 587L834 603M834 603L847 602M834 603L833 614M833 614L843 613M833 614L833 629M833 629L830 638M830 638L840 641M857 542L872 544M857 552L867 556M857 552L855 564M855 564L850 577M850 577L852 588M852 588L864 592M852 588L847 602M847 602L860 607M847 602L843 613M843 613L857 617M843 613L844 629M844 629L840 641M840 641L853 642M840 641L841 655M841 655L853 654M839 664L847 668M875 529L888 532M875 529L872 544M872 544L885 542M867 556L882 558M867 556L869 569M869 569L878 567M869 569L868 580M868 580L864 592M864 592L874 596M864 592L860 607M860 607L872 611M860 607L857 617M857 617L869 622M857 617L858 630M858 630L866 631M853 642L867 646M853 654L863 658M847 668L863 671M892 504L904 508M893 521L903 518M888 532L897 531M885 542L900 546M885 542L882 558M882 558L897 561M882 558L878 567M881 582L874 596M872 611L869 622M869 622L886 621M869 622L866 631M866 631L879 637M866 631L867 646M867 646L878 646M867 646L863 658M863 658L880 660M863 658L863 671M912 484L923 484M912 484L908 496M908 496L921 497M904 508L916 511M904 508L903 518M903 518L916 525M903 518L897 531M897 531L914 533M897 531L900 546M900 546L908 547M900 546L897 561M897 561L909 561M897 561L891 572M891 572L909 572M891 572L888 582M886 600L889 611M889 611L898 611M889 611L886 621M886 621L895 623M879 637L878 646M878 646L893 651M878 646L880 660M923 484L937 486M923 484L921 497M921 497L933 499M921 497L916 511M916 511L931 513M916 525L931 524M916 525L914 533M914 533L928 539M914 533L908 547M909 561L920 564M909 561L909 572M909 572L920 578M909 572L903 585M903 585L901 599M901 599L916 601M901 599L898 611M898 611L910 612M898 611L895 623M895 623L911 625M896 639L909 638M896 639L893 651M939 477L953 474M939 477L937 486M937 486L945 488M937 486L933 499M933 499L945 502M933 499L931 513M931 513L945 517M931 524L939 531M931 524L928 539M928 539L926 549M926 549L938 552M926 549L920 564M920 564L932 567M920 564L920 578M920 578L933 579M920 578L914 592M914 592L932 594M916 601L929 603M916 601L910 612M910 612L923 617M911 625L909 638M909 638L907 653M953 474L962 480M953 474L945 488M945 488L959 494M945 488L945 502M945 502L945 517M945 517L958 516M945 517L939 531M939 531L955 532M939 531L940 543M940 543L950 544M940 543L938 552M932 567L947 569M933 579L946 584M933 579L932 594M932 594L940 595M932 594L929 603M929 603L923 617M923 617L924 631M963 469L981 467M963 469L962 480M962 480L978 480M962 480L959 494M959 494L970 496M959 494L956 504M956 504L969 508M956 504L958 516M958 516L967 521M958 516L955 532M955 532L968 533M955 532L950 544M950 544L962 546M950 544L949 553M949 553L965 560M949 553L947 569M947 569L960 573M947 569L946 584M946 584L955 582M946 584L940 595M940 595L955 596M940 595L940 605M979 456L991 455M979 456L981 467M981 467L994 472M981 467L978 480M978 480L970 496M970 496L984 495M970 496L969 508M969 508L986 507M969 508L967 521M967 521L980 523M967 521L968 533M968 533L981 537M968 533L962 546M962 546L975 549M962 546L965 560M965 560L976 561M965 560L960 573M960 573L955 582M955 582L955 596M955 596L968 600M991 455L994 472M994 472L1004 471M994 472L987 485M984 495L1001 499M986 507L980 523M980 523L997 527M980 523L981 537M981 537L993 540M981 537L975 549M975 549L990 548M975 549L976 561M976 561L985 560M976 561L974 571M974 571L984 573M974 571L970 589M970 589L984 586M970 589L968 600M1003 485L1013 489M1003 485L1001 499M1001 499L997 513M997 513L1012 512M997 513L997 527M997 527L1005 525M997 527L993 540M993 540L1006 538M993 540L990 548M990 548L1005 551M990 548L985 560M985 560L1002 566M984 573L984 586M984 586L995 591M1013 489L1013 501M1013 501L1024 502M1013 501L1012 512M1012 512L1005 525M1005 525L1018 531M1006 538L1015 539M1006 538L1005 551M1005 551L1002 566M1002 566L1011 565M995 579L1010 582M995 579L995 591M995 591L1008 590M1024 502L1037 503M1023 514L1018 531M1018 531L1033 529M1018 531L1015 539M1015 539L1032 543M1015 539L1016 555M1016 555L1025 555M1011 565L1025 568M1011 565L1010 582M1010 582L1026 584M1010 582L1008 590M1008 590L1021 595M1041 491L1053 496M1041 491L1037 503M1037 503L1051 508M1037 503L1033 517M1033 517L1050 522M1033 517L1033 529M1033 529L1044 534M1032 543L1046 547M1032 543L1025 555M1025 555L1039 558M1025 555L1025 568M1025 568L1040 575M1025 568L1026 584M1026 584L1035 587M1021 595L1035 599M1053 496L1066 495M1053 496L1051 508M1051 508L1061 508M1050 522L1061 526M1050 522L1044 534M1044 534L1060 536M1044 534L1046 547M1046 547L1039 558M1039 558L1055 562M1040 575L1050 577M1040 575L1035 587M1035 587L1051 588M1035 587L1035 599M1035 599L1044 602M1035 599L1032 610M1032 610L1046 613M1068 483L1080 485M1068 483L1066 495M1066 495L1061 508M1061 508L1078 514M1061 508L1061 526M1061 526L1075 522M1061 526L1060 536M1060 536L1072 540M1060 536L1056 550M1056 550L1070 550M1056 550L1055 562M1055 562L1067 565M1055 562L1050 577M1050 577L1062 579M1050 577L1051 588M1051 588L1061 590M1051 588L1044 602M1044 602L1059 599M1044 602L1046 613M1046 613L1057 613M1083 473L1080 485M1080 485L1091 488M1079 500L1089 503M1079 500L1078 514M1078 514L1089 513M1078 514L1075 522M1075 522L1084 526M1075 522L1072 540M1072 540L1085 538M1070 550L1081 555M1070 550L1067 565M1067 565L1077 568M1067 565L1062 579M1062 579L1078 580M1062 579L1061 590M1061 590L1072 590M1061 590L1059 599M1059 599L1075 604M1059 599L1057 613M1094 479L1106 478M1091 488L1106 489M1091 488L1089 503M1089 503L1104 504M1089 503L1089 513M1089 513L1084 526M1084 526L1099 528M1085 538L1099 545M1085 538L1081 555M1081 555L1092 558M1081 555L1077 568M1077 568L1078 580M1078 580L1092 582M1078 580L1072 590M1072 590L1075 604M1075 604L1086 604M1075 604L1067 618M1067 618L1065 627M1106 478L1106 489M1106 489L1104 504M1104 504L1117 506M1104 504L1104 515M1104 515L1116 521M1104 515L1099 528M1099 528L1111 532M1099 545L1110 543M1099 545L1092 558M1093 567L1092 582M1092 582L1101 580M1092 582L1087 595M1087 595L1086 604M1086 604L1097 608M1086 604L1082 618M1082 618L1096 622M1122 470L1135 470M1122 470L1121 482M1121 482L1136 485M1121 482L1116 497M1116 497L1131 496M1116 497L1117 506M1117 506L1131 506M1117 506L1116 521M1116 521L1126 524M1116 521L1111 532M1111 532L1123 535M1110 543L1125 548M1105 556L1117 560M1105 556L1102 568M1102 568L1120 571M1102 568L1101 580M1101 580L1114 588M1101 597L1097 608M1097 608L1111 614M1097 608L1096 622M1096 622L1106 625M1144 448L1153 450M1144 448L1140 457M1140 457L1153 461M1140 457L1135 470M1136 485L1147 486M1136 485L1131 496M1131 496L1144 497M1131 496L1131 506M1131 506L1144 514M1131 506L1126 524M1126 524L1138 525M1123 535L1137 540M1123 535L1125 548M1125 548L1117 560M1117 560L1135 563M1117 560L1120 571M1120 571L1129 573M1120 571L1114 588M1114 588L1129 586M1114 588L1111 598M1111 598L1124 604M1111 598L1111 614M1111 614L1125 616M1111 614L1106 625M1106 625L1120 628M1153 450L1165 451M1153 450L1153 461M1146 474L1160 476M1146 474L1147 486M1147 486L1160 490M1147 486L1144 497M1144 497L1156 499M1144 497L1144 514M1144 514L1152 512M1144 514L1138 525M1138 525L1154 524M1138 525L1137 540M1137 540L1151 541M1133 549L1135 563M1135 563L1146 564M1135 563L1129 573M1129 573L1141 577M1129 573L1129 586M1129 586L1143 593M1129 586L1124 604M1124 604L1125 616M1125 616L1136 614M1167 438L1180 439M1167 438L1165 451M1165 451L1165 461M1165 461L1178 463M1165 461L1160 476M1160 476L1174 477M1160 476L1160 490M1160 490L1170 490M1160 490L1156 499M1152 512L1165 518M1152 512L1154 524M1154 524L1151 541M1151 541L1166 542M1151 541L1149 554M1149 554L1163 556M1146 564L1158 569M1146 564L1141 577M1141 577L1158 581M1143 593L1155 593M1141 602L1136 614M1136 614L1147 620M1180 439L1197 442M1180 439L1176 452M1176 452L1190 456M1176 452L1178 463M1178 463L1191 468M1178 463L1174 477M1170 490L1182 494M1170 490L1173 501M1165 518L1179 517M1165 518L1167 529M1167 529L1181 530M1167 529L1166 542M1166 542L1163 556M1163 556L1174 556M1163 556L1158 569M1158 569L1158 581M1158 581L1166 579M1155 593L1149 605M1149 605L1162 607M1149 605L1147 620M1199 429L1212 432M1199 429L1197 442M1197 442L1205 442M1197 442L1190 456M1190 456L1204 456M1190 456L1191 468M1191 468L1201 470M1191 468L1189 481M1189 481L1199 479M1182 494L1200 495M1184 508L1195 507M1184 508L1179 517M1179 517L1191 522M1179 517L1181 530M1181 530L1175 545M1175 545L1187 548M1175 545L1174 556M1174 556L1184 562M1174 556L1172 567M1172 567L1166 579M1166 579L1182 584M1166 579L1167 594M1167 594L1162 607M1162 607L1175 611M1212 432L1223 431M1212 432L1205 442M1205 442L1204 456M1201 470L1213 471M1201 470L1199 479M1199 479L1211 487M1200 495L1195 507M1191 522L1206 521M1193 531L1201 537M1193 531L1187 548M1187 548L1199 547M1184 562L1201 560M1184 562L1187 570M1187 570L1200 575M1187 570L1182 584M1182 584L1195 585M1180 599L1191 601M1180 599L1175 611M1224 422L1235 422M1223 431L1233 438M1218 443L1230 449M1220 457L1232 464M1213 471L1231 477M1213 471L1211 487M1211 487L1227 487M1211 487L1210 500M1210 500L1222 501M1210 500L1209 512M1209 512L1206 521M1206 521L1217 525M1201 537L1215 537M1201 537L1199 547M1199 547L1217 554M1199 547L1201 560M1201 560L1214 565M1201 560L1200 575M1200 575L1207 575M1200 575L1195 585M1195 585L1205 588M1195 585L1191 601M1191 601L1203 604M1235 422L1252 423M1235 422L1233 438M1233 438L1247 436M1233 438L1230 449M1230 449L1246 451M1230 449L1232 464M1232 464L1241 461M1232 464L1231 477M1231 477L1240 474M1227 487L1238 492M1227 487L1222 501M1222 501L1237 505M1222 501L1221 513M1221 513L1217 525M1217 525L1230 529M1215 537L1227 538M1215 537L1217 554M1217 554L1214 565M1214 565L1226 567M1214 565L1207 575M1207 575L1221 579M1207 575L1205 588M1205 588L1218 590M1205 588L1203 604M1203 604L1217 601M1252 423L1247 436M1247 436L1258 438M1246 451L1260 456M1241 461L1240 474M1240 474L1251 481M1238 492L1249 490M1238 492L1237 505M1237 505L1252 507M1237 505L1231 516M1231 516L1244 516M1230 529L1247 530M1227 538L1243 541M1227 554L1243 557M1227 554L1226 567M1221 579L1237 578M1221 579L1218 590M1218 590L1233 591M1268 417L1278 415M1268 417L1264 430M1264 430L1258 438M1258 438L1272 442M1260 456L1272 455M1260 456L1259 467M1259 467L1267 466M1251 481L1269 483M1251 481L1249 490M1249 490L1265 492M1249 490L1252 507M1252 507L1261 508M1252 507L1244 516M1244 516L1257 518M1247 530L1254 530M1247 530L1243 541M1243 541L1257 547M1243 541L1243 557M1243 557L1254 557M1238 566L1251 571M1238 566L1237 578M1237 578L1233 591M1233 591L1247 596M1278 405L1296 408M1278 415L1290 420M1278 415L1279 429M1279 429L1272 442M1272 442L1286 446M1272 442L1272 455M1272 455L1286 456M1267 466L1280 468M1267 466L1269 483M1269 483L1282 481M1265 492L1275 494M1265 492L1261 508M1261 508L1274 512M1261 508L1257 518M1257 518L1274 522M1257 518L1254 530M1254 530L1269 532M1254 530L1257 547M1257 547L1268 550M1257 547L1254 557M1254 557L1267 558M1251 571L1262 572M1251 571L1248 583M1248 583L1258 583M1248 583L1247 596M1296 408L1309 409M1296 408L1290 420M1290 420L1304 423M1286 435L1304 435M1286 435L1286 446M1286 446L1298 449M1286 456L1294 461M1286 456L1280 468M1280 468L1292 475M1282 481L1295 485M1282 481L1275 494M1274 512L1274 522M1274 522L1283 525M1274 522L1269 532M1269 532L1285 535M1269 532L1268 550M1268 550L1278 548M1268 550L1267 558M1267 558L1262 572M1262 572L1277 574M1262 572L1258 583M1306 396L1321 398M1309 409L1321 412M1309 409L1304 423M1304 423L1319 427M1304 423L1304 435M1304 435L1315 439M1304 435L1298 449M1298 449L1311 451M1298 449L1294 461M1294 461L1292 475M1292 475L1307 477M1292 475L1295 485M1295 485L1306 486M1289 498L1302 500M1289 498L1290 511M1290 511L1298 514M1290 511L1283 525M1283 525L1300 527M1283 525L1285 535M1285 535L1298 537M1285 535L1278 548M1278 548L1290 553M1278 548L1279 562M1279 562L1277 574M1277 574L1290 580M1277 574L1274 586M1274 586L1287 593M1321 398L1333 402M1321 398L1321 412M1321 412L1329 413M1321 412L1319 427M1319 427L1315 439M1315 439L1329 439M1311 451L1323 453M1311 451L1311 460M1311 460L1323 467M1307 477L1321 479M1307 477L1306 486M1306 486L1320 493M1306 486L1302 500M1302 500L1317 505M1302 500L1298 514M1298 514L1300 527M1300 527L1311 530M1298 537L1290 553M1290 553L1291 562M1291 562L1290 580M1290 580L1302 582M1287 593L1297 590M1338 390L1352 391M1338 390L1333 402M1333 402L1348 405M1333 402L1329 413M1329 413L1347 416M1329 413L1329 426M1329 426L1329 439M1329 439L1341 442M1329 439L1323 453M1323 453L1336 453M1323 453L1323 467M1323 467L1332 468M1323 467L1321 479M1321 479L1334 479M1321 479L1320 493M1320 493L1330 494M1320 493L1317 505M1317 505L1326 503M1317 505L1312 518M1312 518L1328 518M1312 518L1311 530M1311 530L1323 531M1311 530L1310 541M1310 541L1324 542M1310 541L1303 557M1303 557L1306 565M1306 565L1302 582M1302 582L1297 590M1352 391L1363 393M1352 391L1348 405M1348 405L1359 405M1348 405L1347 416M1347 416L1354 417M1347 416L1341 431M1341 431L1352 432M1341 431L1341 442M1341 442L1336 453M1336 453L1352 457M1336 453L1332 468M1332 468L1350 472M1332 468L1334 479M1334 479L1330 494M1330 494L1326 503M1326 503L1328 518M1328 518L1336 523M1328 518L1323 531M1323 531L1337 531M1324 542L1334 544M1324 542L1319 559M1319 559L1329 562M1319 559L1318 567M1318 567L1313 583M1363 393L1373 398M1363 393L1359 405M1359 405L1354 417M1354 417L1352 432M1352 432L1368 431M1352 432L1352 446M1352 446L1365 449M1352 446L1352 457M1352 457L1365 460M1352 457L1350 472M1350 472L1362 475M1350 472L1346 483M1346 483L1357 483M1346 483L1342 498M1342 498L1354 497M1342 498L1341 507M1341 507L1356 512M1341 507L1336 523M1336 523L1353 525M1336 523L1337 531M1337 531L1350 535M1337 531L1334 544M1334 544L1350 550M1334 544L1329 562M1329 562L1343 563M1329 562L1331 574M1380 382L1393 383M1380 382L1373 398M1373 398L1387 395M1373 398L1371 410M1371 410L1386 410M1371 410L1372 418M1372 418L1368 431M1368 431L1380 439M1368 431L1365 449M1365 449L1381 449M1365 449L1365 460M1365 460L1375 459M1365 460L1362 475M1357 483L1371 485M1357 483L1354 497M1354 497L1366 501M1356 512L1365 512M1356 512L1353 525M1353 525L1366 527M1353 525L1350 535M1350 535L1362 539M1350 535L1350 550M1350 550L1360 550M1350 550L1343 563M1393 383L1401 388M1393 383L1387 395M1387 395L1400 401M1387 395L1386 410M1386 410L1398 413M1386 410L1380 424M1380 424L1380 439M1380 439L1391 440M1380 439L1381 449M1381 449L1389 453M1381 449L1375 459M1375 459L1391 464M1375 459L1375 472M1375 472L1384 474M1375 472L1371 485M1371 485L1384 491M1371 485L1366 501M1366 501L1382 502M1366 501L1365 512M1365 512L1380 515M1365 512L1366 527M1366 527L1374 529M1366 527L1362 539M1362 539L1373 537M1362 539L1360 550M1360 550L1374 551M1406 375L1416 373M1400 401L1398 413M1398 413L1394 428M1394 428L1408 425M1391 440L1404 440M1389 453L1402 451M1391 464L1384 474M1384 474L1401 482M1384 474L1384 491M1384 491L1394 491M1384 491L1382 502M1382 502L1380 515M1380 515L1391 518M1380 515L1374 529M1374 529L1390 531M1374 529L1373 537M1373 537L1387 544M1373 537L1374 551M1415 401L1409 416M1409 416L1408 425M1408 425L1404 440M1404 440L1402 451M1402 451L1415 455M1401 468L1416 468M1401 468L1401 482M1401 482L1412 482M1401 482L1394 491M1394 491L1410 492M1395 502L1409 504M1395 502L1391 518M1391 518L1404 518M1391 518L1390 531M1390 531L1404 534M1390 531L1387 544M1387 544L1398 544M1415 455L1416 468M1412 482L1410 492M1410 492L1409 504M1409 504L1404 518M1404 518L1417 521M1404 518L1404 534M1404 534L1414 533M1404 534L1398 544M1417 521L1414 533M651 868L656 860M658 883L664 877M647 843L654 836M651 854L664 847M651 854L656 860M656 860L668 859M656 860L664 877M664 877L678 868M654 836L670 825M654 836L664 847M664 847L668 859M668 859L682 851M678 868L690 880M652 802L665 797M652 802L659 813M659 813L670 825M676 836L687 832M682 851L692 840M682 851L691 859M691 859L700 854M697 873L710 862M697 873L704 883M655 784L665 797M665 797L669 806M669 806L681 795M669 806L675 815M675 815L687 832M687 832L695 818M687 832L692 840M692 840L709 834M692 840L700 854M700 854L710 862M710 862L721 853M710 862L719 873M719 873L731 863M719 873L727 885M681 795L691 809M691 809L695 818M695 818L711 810M695 818L709 834M709 834L716 847M716 847L728 835M716 847L721 853M721 853L731 848M721 853L731 863M731 863L741 876M711 810L718 803M711 810L715 825M715 825L730 818M715 825L728 835M728 835L735 828M728 835L731 848M731 848L744 843M731 848L743 858M749 869L763 863M749 869L755 883M755 883L772 877M718 803L731 796M735 828L751 819M735 828L744 843M744 843L756 835M750 853L763 863M763 863L775 851M763 863L772 877M772 877L782 868M672 701L680 699M677 713L689 708M731 796L741 810M741 810L750 804M741 810L751 819M751 819L760 812M751 819L756 835M756 835L765 823M756 835L767 842M767 842L775 851M775 851L784 848M782 868L787 877M787 877L803 867M680 699L692 687M689 708L694 719M765 823L780 819M765 823L777 834M777 834L788 830M777 834L784 848M784 848L795 836M788 859L802 847M788 859L803 867M811 884L816 872M692 687L705 679M692 687L698 700M698 700L714 693M711 710L719 707M711 710L720 724M720 724L730 715M788 830L795 836M795 836L805 833M802 847L818 844M802 847L812 865M812 865L822 851M812 865L816 872M816 872L830 885M830 885L842 875M705 679L719 675M705 679L714 693M714 693L724 688M719 707L734 697M719 707L730 715M801 823L805 833M818 844L822 851M822 851L836 846M822 851L833 866M833 866L845 861M833 866L842 875M710 661L720 653M719 675L724 688M724 688L736 679M724 688L734 697M734 697L742 687M740 710L748 699M845 861L853 847M853 867L855 879M703 631L712 639M712 639L726 637M720 653L733 642M736 679L748 670M736 679L742 687M742 687L748 699M715 621L725 616M715 621L726 637M726 637L733 623M726 637L733 642M733 642L740 638M741 657L750 647M748 670L756 679M756 679L765 669M756 679L764 690M725 616L733 623M733 623L747 621M733 623L740 638M740 638L753 630M740 638L750 647M750 647L764 643M756 657L765 669M747 621L759 612M753 630L768 622M764 643L774 632M764 643L772 653M772 653L778 643M759 612L768 622M768 622L780 614M768 622L774 632M774 632L788 623M778 643L793 637M788 623L793 637M374 678L390 682M390 682L401 682M410 671L428 674M401 682L422 691M401 682L396 700M396 700L416 709M428 674L447 679M428 674L422 691M416 709L429 717M438 695L460 701M469 666L485 671M469 666L459 688M459 688L460 701M460 701L469 709M485 671L501 674M485 671L482 693M482 693L498 693M482 693L469 709M503 660L520 662M503 660L501 674M501 674L523 681M501 674L498 693M520 662L539 667M520 662L523 681M548 652L564 662M581 651L577 667M548 785L557 789M557 789L577 797M557 789L555 811M555 811L567 815M587 758L607 769M587 758L579 776M579 776L577 797M569 833L566 851M566 851L580 852M566 851L554 866M554 866L569 865M554 866L555 884M555 884L564 884M798 133L818 137M798 133L795 150M613 749L628 758M595 788L614 789M595 788L595 803M595 803L609 807M589 818L611 825M586 832L603 842M586 832L580 852M580 852L599 862M851 34L847 49M847 49L846 70M846 70L854 74M836 88L826 96M826 96L845 101M824 122L841 124M628 758L643 764M628 758L618 776M618 776L614 789M614 789L609 807M609 807L629 813M609 807L611 825M611 825L623 831M611 825L603 842M603 842L621 846M603 842L599 862M599 862L617 861M866 58L878 56M854 74L878 74M854 74L854 88M643 764L637 778M637 778L633 799M629 813L623 831M623 831L621 846M621 846L633 849M617 861L631 869M609 875L629 882M878 56L893 61M878 56L878 74M878 74L895 78M875 99L889 101M875 99L869 113M869 113L880 120M633 849L631 869M631 869L629 882M889 101L880 120M899 105L903 119M956 120L953 141M953 141L944 154M944 154L963 158M980 110L995 116M980 110L978 126M972 148L988 145M954 180L950 196M950 196L973 196M998 100L1014 98M998 100L995 116M995 116L1011 122M988 145L1003 158M988 145L977 166M977 166L975 186M975 186L994 187M975 186L973 196M973 196L986 204M1014 98L1037 106M1014 98L1011 122M1011 122L1027 126M1011 122L1007 134M1007 134L1003 158M1003 158L1023 158M1003 158L1000 169M1000 169L994 187M1037 106L1027 126M1027 126L1049 131M1027 126L1025 141M1018 176L1029 178M1004 190L1030 201M1004 190L1006 209M1059 83L1075 79M1059 83L1062 101M1055 112L1071 113M1055 112L1049 131M1049 131L1066 140M1049 131L1045 143M1045 143L1056 149M1045 143L1041 166M1041 166L1058 172M1041 166L1029 178M1030 201L1018 217M1018 217L1033 221M1082 67L1106 71M1082 67L1075 79M1075 79L1098 93M1075 79L1070 101M1070 101L1094 111M1071 113L1089 125M1066 140L1056 149M1056 149L1080 160M1058 172L1071 178M1058 172L1045 186M1045 186L1041 200M1033 221L1052 228M1106 71L1116 79M1106 71L1098 93M1098 93L1115 90M1098 93L1094 111M1094 111L1105 107M1089 125L1099 131M1080 160L1090 166M1080 160L1071 178M1066 193L1084 200M1066 193L1059 213M1059 213L1052 228M1052 228L1070 231M1115 90L1129 98M1115 90L1105 107M1105 107L1128 117M1105 107L1099 131M1100 147L1090 166M1090 166L1112 173M1092 179L1109 185M1084 200L1103 204M1078 210L1070 231M1129 98L1148 107M1129 98L1128 117M1121 133L1137 138M1121 133L1111 155M1111 155L1112 173M1112 173L1131 171M1109 185L1103 204M1103 204L1093 220M1093 220L1107 224M1093 220L1092 233M1092 233L1102 246M1141 123L1163 130M1141 123L1137 138M1137 138L1158 148M1137 138L1130 157M1130 157L1131 171M1131 171L1145 177M1131 171L1120 189M1120 189L1135 201M1120 189L1119 210M1107 224L1128 232M1107 224L1102 246M1102 246L1128 244M1045 445L1058 456M1045 445L1036 463M1036 463L1058 473M1033 485L1045 485M1163 130L1158 148M1158 148L1155 164M1155 164L1164 172M1145 177L1135 201M1135 201L1138 211M1138 211L1150 220M1138 211L1128 232M1070 433L1082 440M1070 433L1058 456M1058 473L1067 475M1164 172L1158 187M1158 187L1155 206M1150 220L1169 222M1150 220L1150 239M1150 239L1159 238M1096 407L1083 430M1083 430L1106 430M1083 430L1082 440M1082 440L1100 445M1082 440L1075 456M1075 456L1090 462M1075 456L1067 475M1174 186L1172 210M1172 210L1169 222M1169 222L1159 238M1100 445L1113 450M1136 382L1134 406M1134 406L1152 410M1126 419L1149 423M1126 419L1127 432M1127 432L1141 445M1158 393L1167 396M1158 393L1152 410M1149 423L1161 428M1149 423L1141 445M1167 396L1169 416M1169 416L1161 428M1193 381L1209 389M1193 400L1206 405M1193 400L1187 421M1209 389L1206 405M1206 405L1202 425M1314 362L1327 367M1314 362L1312 381M1333 351L1355 355M1333 351L1327 367M1327 367L1352 374M1355 355L1373 364M1355 355L1352 374M1373 364L1392 363" fill="none" stroke="#fff" stroke-width="1.1" stroke-opacity=".85"/>
<g fill="none" stroke="#cfcfcf" stroke-width="2" stroke-linejoin="round" stroke-linecap="round"><polyline points="129,162 158,139 198,99 216,59 230,9 234,0"/><polyline points="263,0 266,49 273,99 298,124 328,154 368,199 395,246 408,279"/><polyline points="-2,354 58,349 98,334 135,344"/><polyline points="-2,589 38,584 78,599 135,617"/><polyline points="223,737 258,719 298,699 338,684 378,677 418,689 468,709 518,719 578,714 638,709 698,689"/><polyline points="658,886 678,829 698,769 718,709 748,649 778,589 808,529 838,469 868,409"/><polyline points="742,158 778,164 832,171 868,184 910,199 943,199 978,214 1018,239 1048,249"/><polyline points="832,171 818,219 808,269 798,329 788,389 778,449"/><polyline points="595,389 638,379 698,374 758,369 818,389 858,419 888,409"/><polyline points="595,509 648,504 698,509 738,517 798,524 843,539"/><polyline points="888,409 918,419 958,449 998,489 1058,494 1118,479 1198,449 1278,439 1348,429 1417,424"/><polyline points="938,229 933,279 923,329 913,379 903,419"/><polyline points="998,489 978,529 968,569 988,599"/><polyline points="858,559 898,549 958,539 1028,529 1098,519"/><polyline points="1048,249 1088,289 1108,279 1158,259 1208,234 1263,204 1318,174 1378,139 1417,114"/><polyline points="158,886 198,849 248,829 298,799 328,749 338,709"/><polyline points="558,886 578,829 598,789 628,749 648,719"/><polyline points="784,643 798,639 813,634 823,639"/></g>
<g fill="none" stroke="#ffffff" stroke-width="1.8" stroke-linejoin="round" stroke-linecap="round"><polyline points="66,0 70,29 64,79 62,119 56,149 48,189 38,229"/><polyline points="358,0 378,19 398,59 416,94 428,114 426,149 418,181 398,209"/><polyline points="301,203 328,194 358,184 398,164 428,139"/><polyline points="589,17 618,29 658,37 698,29 738,44 798,39 848,29"/><polyline points="-2,284 38,279 78,264 118,239 158,219 198,211 238,199 258,174"/><polyline points="-2,509 38,504 88,479 128,459"/><polyline points="77,719 118,724 168,739 223,737"/><polyline points="223,737 226,689 220,649"/><polyline points="743,164 788,159 834,177 878,181 908,199"/><polyline points="948,209 998,234 1038,249 1088,264 1148,249 1223,194 1288,169 1348,144 1417,99"/><polyline points="1042,72 1078,64 1109,64 1158,89 1169,166 1184,214"/><polyline points="938,484 998,469 1078,449 1158,419 1238,399 1328,379 1417,374"/><polyline points="1028,509 1098,494 1178,474 1278,477 1338,459 1417,449"/><polyline points="1038,549 1118,539 1198,534 1308,534 1417,519"/><polyline points="1038,589 1108,591 1188,593 1258,579 1338,559 1398,541"/><polyline points="848,589 898,579 958,589 1038,609"/><polyline points="858,549 918,539 998,549 1058,554"/><polyline points="1163,349 1168,399 1166,469 1166,539 1168,599"/><polyline points="1220,389 1223,449 1220,509 1216,589"/><polyline points="1298,369 1300,449 1304,529 1298,589"/><polyline points="1110,449 1110,509 1110,589 1110,629"/><polyline points="398,677 448,689 498,694 558,709 608,704 648,694"/><polyline points="482,677 518,649 558,639 598,649 658,629"/><polyline points="698,805 738,819 788,829 828,839"/><polyline points="653,768 648,809 638,849 633,886"/><polyline points="518,779 558,819 598,849 628,886"/></g>
<g fill="none" stroke="#d6cbdc" stroke-width="2" stroke-opacity=".8" stroke-linejoin="round"><polyline points="468,-1 558,54 648,109 738,164 853,234 924,270"/><polyline points="1188,-6 1223,59 1138,114 1045.5,169 1088,234 1096,267"/><polyline points="0,673 38,691 70,720 72,749 68,788 73,823 108,844 148,865 178,889"/></g>
<g fill="none" stroke="#a5d8f1" stroke-width="1" stroke-opacity=".85" stroke-linejoin="round"><polyline points="117,6 110,36 125,70 121,88"/><polyline points="184,6 173,44 166,88 181,114 192,126"/><polyline points="274,-1 259,40 236.5,85 207,122"/><polyline points="438,21 408,66 371,92 333,118 304,148 274,178 236.5,208 207,237.5 154.5,275 110,293 72.5,308"/><polyline points="494,193 479,222.6 494,237.5 520,222.6"/><polyline points="133,546.5 113,561.5 93,571.5 73,589 53,599 33,614 13,629 -2,639"/><polyline points="343,698 330.5,715.5 318,728 308,738 278,740.5 268,735.5"/><polyline points="423,710.5 423,753 428,773 408,803 393,828 388,863"/><polyline points="623,569 628,589 633,614 643,629"/><polyline points="1008,239 1000,259 990,289 983,319"/><polyline points="18,69 6,99 12,134 28,164 18,199"/><polyline points="298,279 328,271 348,284 370,279"/><polyline points="538,755 518,749 498,741 478,724 458,717 438,719"/></g>
<g fill="#c1e9fc">
<polygon points="1423,99 1417.5,104 1408,116.5 1400.5,124 1383,139 1363,146.5 1348,149 1328,159 1318,169 1305.5,174 1288,184 1275.5,196.5 1263,206.5 1248,211.5 1233,221.5 1218,226.5 1208,234 1198,231 1195.5,244 1188,251.5 1163,254 1150.5,264 1138,254 1118,261.5 1100.5,271.5 1095.5,289 1088,301.5 1073,314 1068,324 1048,321.5 1038,329 1020.5,349 1010.5,359 1000.5,379 991,381 986,389 983,401 981,413 981.5,419 982.5,436 991,443 997,448 991,446.8 978.7,448.7 970,451.6 964.3,447.8 962.4,440 956.6,447.8 957.6,455.4 950.9,455.4 947,450.6 935.5,457.4 929.8,458.3 922,453.5 914.4,457.4 906.8,464 897.2,470.8 892.4,480.4 896,482 902,480.4 911.6,469.8 922,476.5 925.9,485.2 929.8,480.4 939.4,478.4 949,486 954.7,497.6 960.5,493.8 956.6,488 957.6,476.5 950.9,474.6 954.7,467 964.3,465 970,468.9 973.9,467 977.7,460.2 991,464 997.8,469 1006.5,469.8 1006.5,464 1012,467 1016,478.4 1024.7,491 1026,478.4 1027.6,469 1025.6,459 1020,453.5 1019,446.8 1024.7,441 1024.7,428.6 1027.6,425.7 1041,435.3 1053.5,441 1058,447.8 1056,454 1059,459 1064.7,447 1059.5,435 1051,426.7 1042.5,413 1044,401 1043.3,397 1051.8,394.8 1070,400 1082.7,406.5 1091.2,418.2 1097.6,430 1099.8,449 1101,456 1103,449 1101.9,434.2 1100.8,423.5 1099.8,413 1103,406.5 1098.7,402 1097.6,389.5 1101.9,383 1108.3,376.7 1112.5,370.3 1116.8,365 1128.5,364 1144.5,358.6 1160.5,352 1168,348 1183,347 1198,349 1205,353 1205,357.5 1195.6,370.3 1191.4,376.7 1185,377 1188,370 1197,359.6 1193.5,355.4 1175.4,359.6 1168,361 1158,363 1160.5,370.3 1162.6,379.9 1170,375 1176.4,370 1177.5,381 1179.6,385.2 1185.7,388.5 1201,391 1207.4,388.5 1203.6,378 1206,370.6 1213.8,369.3 1216.3,375.7 1220,387 1229,388.5 1233,401 1235.5,401 1234.2,391 1231.7,380.8 1229,368 1221.5,355 1218,349 1213.8,334 1218,324 1222,319.4 1233,325 1246,329 1256,333 1261,341 1260,349 1257.2,359 1249.6,365.5 1259.8,363 1267.5,360.3 1282.8,356.5 1293,360.3 1300.7,368 1305.8,375.7 1311,375.7 1316,365.5 1314.7,352.7 1318.6,345 1322.4,338.6 1331.4,336 1357,340 1382.5,348.8 1405.5,356.5 1423,360"/>
<polygon points="866.6,-6 862.7,14.3 865.3,34.8 866.6,55 873,73 884.5,88.5 894.7,101 907.5,116.6 913.9,132 913.9,142 910,152.4 907.5,178 906.2,198.4 908,221.4 914,233 917.4,262 913.5,290 900.7,341.5 890.5,372 880.3,405.4 864,444 857,454 845,474 834,494 830,514 827,529 823.5,539 821.5,547.6 814,551.5 804.3,563 796.6,562 794.7,570.6 789,567.8 779.4,571.6 771.7,585 779.4,592.7 784,601 787,606 792.8,610 794.7,618.6 797.6,629 801,639 805.4,643 804,651 810,657 820,653 823.3,646 818,638 815.8,629 817.7,618.6 820.6,611.9 828.3,606 833,598.4 842.6,592.7 845.5,587 835,584 833,575.4 841.7,570.6 846.5,558 850,555 845.5,553.4 836,548.6 836,545 838,529 841,514 844,494 854,474 866,454 873,444 888,408 898,377 908.4,341.5 921,298 931.4,262 936.5,234 939.5,221.4 942,203.5 943.3,183 944.6,162.6 943.3,142 940.7,119 938,101 934.3,88.5 924,89 920,96 918,87 926,82 930.5,78 920.3,65.5 902.4,47.6 889.6,32 887,14 892,-6"/>
<polygon points="758.3,537 761,551.5 754.4,563 746.8,570.6 732.4,567.8 735.3,575.4 746.8,582 737.2,592.7 725.7,598.4 718,600.4 712,607 718,613 727.6,612 744.8,606 752.5,592.7 758.3,581.2 765,567.8 767.9,551.5 769.8,537 768,521 764,509 760,515 761,525"/>
<polygon points="805,648 792,666 777,684 761.6,696.8 751.4,707 741,714.7 713,727.5 687.5,737.8 662,746 658,748 643,738 628,738 620,733 613,739 626,745 633,753 653,768 658,778 683,793 698,805.5 718,789 748,790.5 793,813 830.5,833 858,843 853,823 843,793 833,770.5 845.5,770.5 855.5,793 860.5,818 865.5,843 865.5,868 868,894 1423,894 1423,623 1393.7,627 1390,621 1384,616 1363,617 1340.5,615 1298,629 1260,641 1228,650.6 1198,662 1173,672 1156.9,678 1156,669 1153.7,663.5 1154.7,658 1150,660 1148,665 1124,666.7 1092,670 1028,667.7 1025.6,665.7 993,671 973.9,676 958,684 930.4,691.7 892,704.5 888,700 892,694 930.4,681.5 945,678 936,673 928,665 916.4,663.8 910,671 903,676 868,679 843,679 839,673 851.4,666 841,653.5 823,646 813,652"/>
<polygon points="950.9,602.4 960.5,608 967,606.3 975.8,598.6 983.5,608 993,613 1005.5,624.5 1021.8,620.6 1033.3,616.8 1035.2,627.4 1027.6,632 1016,639 1014,650.4 1022,652 1035.2,654 1038,658 1028,661 1025,658 1002.6,658.5 983.5,663 964.3,670.6 945,678 936,673 928,665 916.4,663.8 914.4,656 920.2,648.4 923,631.2 937.4,614"/>
<polygon points="1028,621 1054.6,633.7 1070.6,625.2 1092,624 1123.8,621 1145,624 1155.8,613.5 1177,606 1198,607 1218,600 1260.6,595.9 1292.5,593.7 1313.8,586.3 1324.5,581 1335,572.4 1345.8,570.3 1367,569.2 1377.7,565 1388.4,555.4 1393.7,549 1403,545 1423,541 1423,620 1393.7,624 1388,617 1384,612 1340.5,611 1298,624 1266,637 1228,645.4 1187.7,653 1160,665.7 1155,658 1148,648.6 1123.8,649.7 1087.6,648.6 1060,653 1038.6,659.3 1030,657"/>
<polygon points="766,471 776,467 782,473 778,483 784,489 779,497 770,494 767,484"/>
<polygon points="790,477 796,475 798,485 792,489"/>
<polygon points="628,54 632,57 620,79 608,99 601,119 596,117 602,97 614,75"/>
<polygon points="638,147 644,151 648,164 644,184 638,204 630,224 622,227 626,207 634,185 638,164 630,154 620,152 616,144 624,141"/>
<polygon points="369,306 378,298 388,292 396,285 402,283 403,299 395,308 392,317 393,326 384,328 371,325 376,315 372,311"/>
<polygon points="360,249 376,241 380,247 364,259 352,263"/>
<polygon points="269,101 283,95 293,99 283,109 273,114"/>
<polygon points="226,239 238,231 248,235 236,247"/>
<polygon points="116,79 126,76 132,84 124,91"/>
<polygon points="38,509 46,502 52,511 48,521 38,521"/>
<polygon points="661,283 668,281 671,294 665,299"/>
<polygon points="844,232 851,230 854,245 847,247"/>
<polygon points="887,99 891,101 886,129 882,154 878,153 882,127"/>
<polygon points="1001,49 1016,41 1038,37 1048,29 1058,19 1062,24 1050,39 1036,47 1018,51 1006,59"/>
<polygon points="1098,21 1116,15 1126,21 1118,31 1102,35"/>
<polygon points="1016,174 1022,171 1026,184 1030,195 1022,199 1018,187"/>
<polygon points="1032,177 1038,175 1042,189 1036,193"/>
<polygon points="948,24 956,19 960,29 953,37"/>
<polygon points="963,39 983,31 990,37 973,47"/>
<polygon points="1336,9 1341,7 1350,34 1345,36"/>
<polygon points="1388,59 1394,57 1402,84 1396,86"/>
<polygon points="864,247 870,245 872,261 866,263"/>
<polygon points="822,279 840,267 844,273 828,287"/>
<polygon points="506,49 512,47 510,61 504,61"/>
<polygon points="492,99 498,97 496,111 490,109"/>
<polygon points="521,171 528,167 530,181 522,187"/>
<polygon points="474,239 498,227 502,233 480,247"/>
<polygon points="456,279 468,271 476,277 464,289"/>
<polygon points="531,249 538,245 536,267 528,279 522,277 528,263"/>
</g>
<g fill="none" stroke="#c1e9fc" stroke-linecap="round" stroke-linejoin="round"><polyline points="847,555.5 855,552 861,548 865,541 869,529 870,514 874,505 880,497 886,489 891,481 895,476" stroke-width="5.5"/><polyline points="1260,350 1248,349.5 1236,351 1226,352.5" stroke-width="2.5"/><polyline points="784,603 764,610.5 746.8,613.3 727.6,612 719,610" stroke-width="4.5"/><polyline points="659,748 659.4,735 667,725 665.8,707 674.7,697 687.5,689 695,671 697.7,653.4 699,633 700,611 714,609" stroke-width="2.8"/><polyline points="624,741 610,749 598,757 583,759 568,757 548,755 536,754" stroke-width="4"/><polyline points="768,497 776,489 784,477 794,461 800,447 804,433 810,419" stroke-width="2.5"/><polyline points="762,497 754,489 756,477 762,467 758,454 762,441" stroke-width="2"/><polyline points="894,483 900,471 906,461 912,449 916,437 914,419 918,404" stroke-width="3"/></g>
<g fill="#f1f3ec"><polygon points="995,389 1001,385 1004,394 1000,405 995,401"/><polygon points="1006,401 1011,399 1014,411 1009,415"/><polygon points="1017,402 1020,401 1022,411 1019,413"/><polygon points="925,464 931.7,462 940.3,468.9 937.4,473.6 927.9,472.7"/><polygon points="1281,311 1287,310 1291,317 1295,324 1300,329 1310,337 1318.6,342 1316,344 1306,339 1297,333 1297,339 1292,341 1288,335 1282,337 1280,329"/><polygon points="1298,355 1303,351.4 1310,361 1312,369 1307,370.6 1302,363"/><polygon points="993,613 1005.5,624.5 998,633 995,642 990,639 988,625"/><polygon points="964,611 970,609 978,639 980,661 974,663 970,639"/><polygon points="933,639 943,633 948,639 940,649"/><polygon points="998,645 1008,641 1010,650 1000,653"/><polygon points="953,617 960,613 962,621 955,624"/><polygon points="1033.3,635.2 1037,633.8 1041.7,633 1043.3,635.3 1043.6,637.6 1038.9,638 1035.3,637.2"/><polygon points="1043.3,640.7 1047.7,640.3 1050.6,642.2 1052.4,645.5 1048.1,646.3 1044.3,647.5 1043.5,644.2"/><polygon points="1055.3,640.3 1050.7,640.5 1048.6,636.4 1049.1,632 1053.1,631.7 1055.9,633.1 1057,636.4"/><polygon points="1059.7,640.3 1059,636.1 1063.5,634.1 1067,636.6 1069,639.9 1066.4,643.1 1061.6,644.3"/><polygon points="1064.2,639.3 1066.3,636.5 1069.6,634.4 1074.8,635.6 1080.1,637.2 1077.7,640.2 1070.5,640.7"/><polygon points="1074.8,635.6 1078.9,632.3 1085.7,633.4 1086.6,638 1084.4,641.8 1079,640.9 1073.6,639.7"/><polygon points="1080.7,648.6 1081.7,645.5 1083.3,642.8 1088.6,643.3 1091.5,645.2 1090.5,647.5 1086.9,650.2"/><polygon points="1095.5,639.5 1091.9,642.4 1086.6,641.9 1084.6,636.6 1087.2,631.6 1092.2,632.6 1095.6,635"/><polygon points="1102.7,647 1097.4,647.1 1092.8,645.4 1093.7,642.5 1099.9,641.8 1103.9,643.2 1106.9,645.3"/><polygon points="1099.7,640.3 1103.1,636.3 1109.3,637.5 1116.3,638.7 1115.1,643.7 1108.8,646.7 1101.5,644.9"/><polygon points="1118.2,640.1 1116.3,642.4 1113.5,641.8 1111.6,639 1113.3,636.3 1115.8,635.6 1118.2,637"/><polygon points="1118.9,635.6 1121.3,633.9 1124.1,635.5 1124.6,639.6 1122.4,642.1 1119,644.1 1116.2,639.6"/><polygon points="1129.1,642 1126,640.2 1128.7,638 1131.4,637.6 1135.5,637.7 1134.9,640.9 1132,642.1"/><polygon points="1143.3,629.5 1144,634.5 1142.2,638.5 1137.9,638.6 1132.8,637 1133.8,631.6 1137.8,627.8"/><polygon points="1150.3,631.3 1153.6,636.5 1150.5,641.6 1144.3,641.3 1139.2,639.3 1139.7,634.6 1144.2,632.8"/><polygon points="1155.6,636.1 1156.1,640.9 1151.5,643.7 1146.6,641.5 1146.9,636.6 1149.3,633.9 1152.7,633.7"/><polygon points="1163,620.8 1166.5,624.6 1164.9,629.8 1159.2,629.2 1154,628.4 1152.5,623 1157.4,619.2"/><polygon points="1168.1,637 1165,632.7 1167.6,628.5 1171,626.9 1175.4,628 1175.6,633.4 1172,635.4"/><polygon points="1179.9,628.6 1172.3,630.1 1167.3,626 1168.7,621.5 1173.1,618.4 1178.1,620.6 1179.6,623.7"/><polygon points="1180.7,637.4 1181,631.5 1186.3,630.2 1190.4,631.1 1192.3,634.8 1190.1,638.3 1185.7,640.2"/><polygon points="1188,633.5 1186,629.4 1187.1,624 1191.4,624.2 1195.4,626.1 1194.5,631.5 1191.6,634.6"/><polygon points="1206.2,620.5 1202.4,622.5 1198.4,623.6 1194,622 1194.7,618.8 1198.8,617.5 1203.3,617.8"/><polygon points="1207.6,639.5 1203.7,639 1203.4,634.8 1205.6,631.6 1209.6,631 1212.7,634.4 1210.7,638.4"/><polygon points="1209.9,631.1 1210.8,627 1214.9,623.5 1220.2,626 1222.5,630.5 1219.2,635 1213.7,633.5"/><polygon points="1227.6,639.4 1222.3,639.6 1217.9,638.7 1217.9,636.5 1220,633.8 1227,633.9 1231.4,636.7"/><polygon points="1234,629.8 1233.1,633 1231.9,636.3 1225.7,635.4 1221.9,633.5 1221.1,630.2 1227.4,628.7"/><polygon points="1237.3,625.4 1232.1,625.9 1231.6,622.6 1231.3,619.5 1236.2,618.6 1239,620.8 1240.4,623.4"/><polygon points="1247.2,615.4 1248.7,620.8 1249,624.7 1246.5,626.5 1242.9,627.7 1242.5,622.5 1244,619.1"/><polygon points="1257.5,632.7 1250.4,632.7 1245.2,630.6 1247.8,627.8 1251.4,626.5 1257.4,626 1258.9,629.2"/><polygon points="1264.4,631.2 1258.5,631.7 1252.6,632.6 1251.8,627.6 1254.7,624.2 1259.7,622.9 1265.2,625.6"/><polygon points="1270.1,615.6 1266.5,616.4 1262.9,615.6 1261.6,613.1 1264.5,611.1 1269.6,610.2 1271.5,613.2"/><polygon points="1275.6,616.1 1271,616.2 1270.5,613.4 1273.8,612 1277.8,611.5 1282,613.3 1278.6,615.4"/><polygon points="1280.7,619.1 1278.9,614.5 1281.9,609.7 1287.3,611.6 1291.8,614.4 1290.1,619.5 1285.1,621.5"/><polygon points="1294.4,616.1 1291,617.2 1288.3,616.5 1287.3,614.6 1287.2,611.5 1291.3,610.7 1294.2,613"/><polygon points="1045.4,635.5 1040.7,635.6 1035.2,633.7 1035.7,628 1041.5,626.2 1045.7,628.3 1049.8,632"/><polygon points="1052.8,633.3 1054.6,629.9 1057.8,627.7 1060.2,630.6 1061.4,633.7 1058.8,635.9 1055.3,636.6"/><polygon points="1065.2,626.9 1069.4,624.1 1074.8,625.7 1077,629.7 1074.4,633.8 1068.6,633.2 1065.4,630.6"/><polygon points="1101.6,632.3 1096.5,637 1089,635.8 1084.4,631.6 1086.1,626 1093.2,626.2 1099.1,627.2"/><polygon points="1095.6,633.5 1102.8,630.6 1110,632.3 1110.5,637.7 1107.1,640.9 1102.3,641.9 1097.4,639.4"/><polygon points="1110.5,632.9 1116.6,631.8 1119.8,635.3 1123.5,639.6 1118.4,643.5 1112.1,642.1 1108.9,638"/><polygon points="1141,631.4 1137,634.7 1131.4,632.5 1126.6,629.6 1129.3,625 1137.1,625.3 1141.6,627.9"/><polygon points="1145.3,632.7 1150.1,631.6 1154.7,633.8 1156.8,638.6 1150.3,640.6 1143.9,640.4 1143.5,635.8"/><polygon points="1157.6,613.2 1163.6,612.4 1167.4,616.3 1166.2,621.1 1160.6,622.1 1153.5,622.3 1154.7,616.7"/><polygon points="1185.5,618.4 1187.4,623.2 1186.1,627 1182.9,628.5 1178,628.5 1179,623.5 1180.6,619.6"/><polygon points="1194.7,616.4 1201.3,619 1198.6,623.1 1191.2,623.7 1183,623.5 1183,619.4 1188.5,617.6"/><polygon points="1208.7,623.2 1203.8,623.9 1198,622.4 1201,618.6 1203.3,614.7 1209.8,615.4 1209.9,619.9"/><polygon points="1222.1,625.2 1216.7,621.6 1222.7,618 1229.7,618.1 1234.7,620.6 1233.4,624.2 1228.2,625.4"/><polygon points="1235.8,617.2 1231.2,615.8 1231.2,610.5 1233.5,606.3 1239,604.2 1242.9,609.8 1241.3,616.5"/><polygon points="1253.9,608.5 1261.2,607.6 1263.1,612.5 1260.8,617.3 1252.8,618 1248.5,614.2 1249.8,610.5"/><polygon points="1270.2,611.3 1264.5,608.3 1267.6,604 1271.3,600.8 1276.3,603 1279.2,606.4 1275.9,609.7"/><polygon points="1322.5,614.2 1314.6,614.6 1304.3,612.7 1308.6,608.3 1317.3,607.1 1328.5,607 1332.8,612"/><polygon points="1328.8,606.7 1329.2,604.7 1332.6,603.9 1336.7,604.2 1337.2,606.3 1335.4,608 1331.3,608.3"/><polygon points="1383.5,600 1389.2,597.7 1394.9,599.2 1397.3,602 1395.3,605 1389.7,605.4 1385.7,603.5"/><polygon points="1373,606.8 1371.4,609 1368.3,607.5 1366.2,606.1 1367.3,604.1 1370.8,603.1 1372.7,605.1"/><polygon points="1281.5,621.8 1278.2,619.8 1277.7,615.1 1280.1,610 1285.2,611.2 1287.8,616.3 1284.3,619.9"/><polygon points="827,565 833,563 837,567 834,572 828,571"/></g>
<polyline points="924,270 916,299 903,344 886,399 864,454 843,499 833,534 828,564 810,599 788,607 758,612 712,610 700,609 699,633 697.7,653.4 695,671 687.5,689 674.7,697 665.8,707 667,725 659.4,735 658,748" fill="none" stroke="#d6cbdc" stroke-width="1.6" stroke-opacity=".8" stroke-linejoin="round"/>
<g fill="#fff" stroke="#aaa" stroke-width="1"><circle cx="586" cy="18" r="2.6"/><circle cx="838" cy="30" r="2.6"/><circle cx="1106" cy="66" r="2.6"/><circle cx="707" cy="114" r="2.6"/><circle cx="1012" cy="117" r="2.6"/><circle cx="427" cy="119" r="2.6"/><circle cx="579" cy="138" r="2.6"/><circle cx="654" cy="143" r="2.6"/><circle cx="416" cy="178" r="2.6"/><circle cx="298" cy="211" r="2.6"/><circle cx="636" cy="218" r="2.6"/><circle cx="1277" cy="157" r="2.6"/><circle cx="1109" cy="206" r="2.6"/><circle cx="1180" cy="217" r="2.6"/><circle cx="1019" cy="235" r="2.6"/><circle cx="1077" cy="286" r="2.6"/><circle cx="681" cy="334" r="2.6"/><circle cx="722" cy="347" r="2.6"/><circle cx="919" cy="331" r="2.6"/><circle cx="1002" cy="345" r="2.6"/><circle cx="1162" cy="356" r="2.6"/><circle cx="1116" cy="398" r="2.6"/><circle cx="665" cy="428" r="2.6"/><circle cx="659" cy="451" r="2.6"/><circle cx="677" cy="486" r="2.6"/><circle cx="720" cy="526" r="2.6"/><circle cx="841" cy="542" r="2.6"/><circle cx="693" cy="592" r="2.6"/><circle cx="761" cy="586" r="2.6"/><circle cx="1213" cy="434" r="2.6"/><circle cx="1122" cy="546" r="2.6"/><circle cx="1236" cy="564" r="2.6"/><circle cx="1321" cy="555" r="2.6"/><circle cx="1109" cy="612" r="2.6"/><circle cx="395" cy="680" r="2.6"/><circle cx="569" cy="720" r="2.6"/><circle cx="74" cy="722" r="2.6"/><circle cx="220" cy="738" r="2.6"/><circle cx="454" cy="810" r="2.6"/><circle cx="751" cy="804" r="2.6"/><circle cx="802" cy="829" r="2.6"/><circle cx="295" cy="855" r="2.6"/></g>
<g font-size="9.3" text-anchor="middle" fill="#333">
<rect x="55.9" y="30.2" width="20.3" height="13.6" rx="1.8" fill="#fff" stroke="#a8a8a8"/><text x="66" y="40.3">402</text>
<rect x="118.8" y="155.2" width="20.3" height="13.6" rx="1.8" fill="#fff" stroke="#a8a8a8"/><text x="129" y="165.3">209</text>
<rect x="387.1" y="239.2" width="15.7" height="13.6" rx="1.8" fill="#fff" stroke="#a8a8a8"/><text x="395" y="249.3">15</text>
<rect x="537.1" y="234.2" width="15.7" height="13.6" rx="1.8" fill="#fff" stroke="#a8a8a8"/><text x="545" y="244.3">23</text>
<rect x="821.9" y="157.2" width="20.3" height="13.6" rx="1.8" fill="#fff" stroke="#a8a8a8"/><text x="832" y="167.3">287</text>
<rect x="942.5" y="176.2" width="11.1" height="13.6" rx="1.8" fill="#fff" stroke="#a8a8a8"/><text x="948" y="186.3">9</text>
<rect x="1158.8" y="113.2" width="20.3" height="13.6" rx="1.8" fill="#fff" stroke="#a8a8a8"/><text x="1169" y="123.3">137</text>
<rect x="1287.2" y="61.2" width="15.7" height="13.6" rx="1.8" fill="#fff" stroke="#a8a8a8"/><text x="1295" y="71.3">53</text>
<rect x="937.5" y="394.2" width="11.1" height="13.6" rx="1.8" fill="#fff" stroke="#a8a8a8"/><text x="943" y="404.3">1</text>
<rect x="823.1" y="418.2" width="15.7" height="13.6" rx="1.8" fill="#fff" stroke="#a8a8a8"/><text x="831" y="428.3">95</text>
<rect x="957.9" y="521.2" width="20.3" height="13.6" rx="1.8" fill="#fff" stroke="#a8a8a8"/><text x="968" y="531.3">678</text>
<rect x="773.9" y="636.2" width="20.3" height="13.6" rx="1.8" fill="#fff" stroke="#a8a8a8"/><text x="784" y="646.3">278</text>
<rect x="651.1" y="677.2" width="15.7" height="13.6" rx="1.8" fill="#fff" stroke="#a8a8a8"/><text x="659" y="687.3">95</text>
</g>
<g fill="#333" stroke="#fff" stroke-width="2" stroke-opacity=".7" paint-order="stroke" stroke-linejoin="round">
<text x="589" y="13.8" font-size="10.5">Warwick</text>
<text x="841" y="25.8" font-size="10.5">Stony Point</text>
<text x="1049" y="63.8" font-size="10.5">Mt Kisco</text>
<text x="1109" y="61.8" font-size="10.5">Bedford</text>
<text x="710" y="109.8" font-size="10.5">Sloatsburg</text>
<text x="1015" y="112.8" font-size="10.5">Chappaqua</text>
<text x="430" y="114.8" font-size="10.5">Hamburg</text>
<text x="582" y="133.8" font-size="10.5">West Milford</text>
<text x="658" y="138.8" font-size="10.5">Ringwood</text>
<text x="419" y="183.8" font-size="10.5">Ogdensburg</text>
<text x="301" y="206.8" font-size="10.5">Newton</text>
<text x="639" y="214.8" font-size="10.5">Wanaque</text>
<text x="1281" y="153.8" font-size="10.5">Norwalk</text>
<text x="1112" y="201.8" font-size="10.5">Greenwich</text>
<text x="1184" y="212.5" font-size="12.4">Stamford</text>
<text x="1022" y="230.8" font-size="10.5">White Plains</text>
<text x="1080" y="281.8" font-size="10.5">Rye</text>
<text x="639" y="260.8" font-size="10.5">Pompton Lakes</text>
<text x="0" y="268.8" font-size="10.5">ast Stroudsburg</text>
<text x="370" y="321.8" font-size="10.5">Hopatcong</text>
<text x="684" y="329.8" font-size="10.5">Wayne</text>
<text x="726" y="343.5" font-size="12.4">Paterson</text>
<text x="923" y="327.5" font-size="12.4">Yonkers</text>
<text x="1005" y="340.8" font-size="10.5">New Rochelle</text>
<text x="1165" y="351.8" font-size="10.5">Bayville</text>
<text x="1121" y="394.8" font-size="10.5">Glen Cove</text>
<text x="668" y="423.8" font-size="10.5">Verona</text>
<text x="662" y="446.8" font-size="10.5">West Orange</text>
<text x="681" y="481.8" font-size="10.5">Orange</text>
<text x="724" y="520.5" font-size="12.4">Newark</text>
<text x="845" y="536.8" font-size="13.4">New York</text>
<text x="697" y="586.5" font-size="12.4">Elizabeth</text>
<text x="765" y="581.8" font-size="10.5">Bayonne</text>
<text x="1216" y="429.8" font-size="10.5">Syosset</text>
<text x="1194" y="490.8" font-size="10.5">Hicksville</text>
<text x="1205" y="526.8" font-size="10.5">Levittown</text>
<text x="1125" y="541.8" font-size="10.5">Hempstead</text>
<text x="1239" y="559.8" font-size="10.5">Massapequa</text>
<text x="1324" y="550.8" font-size="10.5">West Babylon</text>
<text x="1062" y="585.8" font-size="10.5">Valley Stream</text>
<text x="1223" y="583.8" font-size="10.5">Seaford</text>
<text x="1112" y="606.8" font-size="10.5">Oceanside</text>
<text x="1093" y="657.8" font-size="10.5">Long Beach</text>
<text x="398" y="675.8" font-size="10.5">Somerville</text>
<text x="423" y="697.8" font-size="10.5">Manville</text>
<text x="572" y="715.3" font-size="12">Edison</text>
<text x="77" y="717.8" font-size="10.5">Frenchtown</text>
<text x="223" y="733.8" font-size="10.5">Flemington</text>
<text x="457" y="805.8" font-size="10.5">Kendall Park</text>
<text x="754" y="799.8" font-size="10.5">Keansburg</text>
<text x="805" y="824.8" font-size="10.5">Leonardo</text>
<text x="298" y="850.8" font-size="10.5">Hopewell</text>
<text x="451" y="848.8" font-size="10.5">Monmouth</text>
<text x="451" y="860.8" font-size="10.5">Junction</text>
<text x="156" y="872.8" font-size="10.5">New Hope</text>
<text x="586" y="430.8" font-size="10.5">East Hanover</text>
<text x="570" y="471.8" font-size="10.5">Florham Park</text>
<text x="1398" y="473.8" font-size="10.5">Brentwood</text>
<text x="370" y="886.8" font-size="10.5">Princeton</text>
<text x="531" y="886.8" font-size="10.5">Jamesburg</text>
<text x="800" y="886.8" font-size="10.5">Red Bank</text>
</g>
<g fill="#555" font-style="italic" text-anchor="middle">
<text x="466" y="40.8" font-size="10.5" letter-spacing="1.5">Pochuck</text>
<text x="466" y="55.8" font-size="10.5" letter-spacing="1.5">Mountain</text>
<text x="511" y="85.8" font-size="10.5" letter-spacing="1.5">Wawayanda</text>
<text x="511" y="99.8" font-size="10.5" letter-spacing="1.5">Mountain</text>
<text x="451" y="153.8" font-size="10.5" letter-spacing="1.5">Hamburg</text>
<text x="451" y="167.8" font-size="10.5" letter-spacing="1.5">Mountains</text>
<text x="239" y="126.9" font-size="10.8" letter-spacing="1.3" transform="rotate(-37 239 123)">Kittatinny Mountain</text>
<text x="564" y="140.8" font-size="10.5" letter-spacing="1.2" transform="rotate(-57 564 137)">Bearfort Mountain</text>
<text x="292" y="324.8" font-size="10.5" letter-spacing="1.5">Allamuchy</text>
<text x="64" y="495.8" font-size="10.5" letter-spacing="1.5">Scotts</text>
<text x="64" y="509.8" font-size="10.5" letter-spacing="1.5">Mountain</text>
<text x="98" y="560.8" font-size="10.5" letter-spacing="1.2" transform="rotate(-38 98 557)">Musconetcong</text>
<text x="634" y="544.8" font-size="10.5" letter-spacing="1.2" transform="rotate(-55 634 541)">Watchung Mountain</text>
<text x="1084" y="430.8" font-size="10.5" letter-spacing="1.6">Manhasset</text>
<text x="1084" y="444.8" font-size="10.5" letter-spacing="1.6">Neck</text>
<text x="303" y="789.8" font-size="10.5" letter-spacing="1.5">Sourland</text>
<text x="303" y="803.8" font-size="10.5" letter-spacing="1.5">Mountain</text>
<text x="343" y="874.8" font-size="10.5" letter-spacing="1.5">Rocky Hill</text>
</g>
<g fill="#527040" text-anchor="middle" stroke="#fff" stroke-width="1.5" stroke-opacity=".6" paint-order="stroke">
<text x="351" y="7" font-size="11">State Park</text>
<text x="668" y="69" font-size="11">Sterling Forest</text>
<text x="947.5" y="637.8" font-size="10.5">Gateway</text>
<text x="947.5" y="648.8" font-size="10.5">National</text>
<text x="947.5" y="659.8" font-size="10.5">Recreation</text>
<text x="947.5" y="670.8" font-size="10.5">Area</text>
<text x="1364" y="629.8" font-size="10.5">Robert Moses</text>
<text x="1364" y="641.8" font-size="10.5">State Park</text>
<text x="94" y="832.8" font-size="10.5">D&amp;R Canal</text>
<text x="94" y="843.8" font-size="10.5">State Park</text>
</g>
<g fill="#4d8fb5" font-style="italic" text-anchor="middle">
<text x="264" y="45.6" font-size="10" transform="rotate(-62 264 42)">Little Flat Brook</text>
<text x="239" y="222.8" font-size="10.5" transform="rotate(-22 239 219)">Paulins Kill</text>
<text x="113" y="293.8" font-size="10.5" transform="rotate(-20 113 290)">Paulins Kill</text>
<text x="995" y="254.6" font-size="10" transform="rotate(-60 995 251)">Bronx River</text>
<text x="742" y="456.6" font-size="10" transform="rotate(-62 742 453)">Passaic River</text>
<text x="630" y="594.6" font-size="10" transform="rotate(78 630 591)">Rahway River</text>
<text x="1396" y="51.6" font-size="10" transform="rotate(-72 1396 48)">Mill River</text>
</g>
<g fill="#666" font-style="italic" font-size="10">
<text x="451" y="267">1305 ft</text><path d="M443 275l2.5-4 2.5 4z" fill="#777"/>
<text x="910" y="285">548 ft</text><path d="M902 293l2.5-4 2.5 4z" fill="#777"/>
<text x="1268" y="442">388 ft</text><path d="M1260 450l2.5-4 2.5 4z" fill="#777"/>
<text x="167" y="745">552 ft</text><path d="M159 753l2.5-4 2.5 4z" fill="#777"/>
<text x="122" y="779">562 ft</text><path d="M114 787l2.5-4 2.5 4z" fill="#777"/>
<text x="553" y="745">139 ft</text><path d="M545 753l2.5-4 2.5 4z" fill="#777"/>
<text x="854" y="849">255 ft</text><path d="M846 857l2.5-4 2.5 4z" fill="#777"/>
</g>
<g stroke="#000" stroke-width="1.1">
<circle cx="848.5" cy="46" r="4.3" fill="#3ec733"/>
<circle cx="854" cy="68" r="4.3" fill="#d08029"/>
<circle cx="881" cy="81" r="4.3" fill="#d08029"/>
<circle cx="852" cy="119" r="4.3" fill="#3ec733"/>
<circle cx="941" cy="112" r="4.3" fill="#d08029"/>
<circle cx="742" cy="158" r="4.3" fill="#d08029"/>
<circle cx="791" cy="156" r="4.3" fill="#3ec733"/>
<circle cx="810" cy="156" r="4.3" fill="#d08029"/>
<circle cx="834" cy="175" r="4.3" fill="#3ec733"/>
<circle cx="842" cy="207.5" r="4.3" fill="#3ec733"/>
<circle cx="740.5" cy="210" r="4.3" fill="#2481b0"/>
<circle cx="645.5" cy="164.5" r="4.3" fill="#3628be"/>
<circle cx="637.5" cy="229" r="4.3" fill="#3628be"/>
<circle cx="943" cy="205" r="4.3" fill="#d08029"/>
<circle cx="670.5" cy="237" r="4.3" fill="#3628be"/>
<circle cx="639" cy="265" r="4.3" fill="#3628be"/>
<circle cx="694.5" cy="259" r="4.3" fill="#3628be"/>
<circle cx="565.5" cy="282" r="4.3" fill="#3628be"/>
<circle cx="821" cy="260" r="4.3" fill="#3628be"/>
<circle cx="823" cy="279" r="4.3" fill="#3628be"/>
<circle cx="732.5" cy="310" r="4.3" fill="#3628be"/>
<circle cx="755.5" cy="306" r="4.3" fill="#3628be"/>
<circle cx="794.5" cy="320" r="4.3" fill="#3628be"/>
<circle cx="760.5" cy="330" r="4.3" fill="#3628be"/>
<circle cx="851.5" cy="321" r="4.3" fill="#3628be"/>
<circle cx="832" cy="331" r="4.3" fill="#3628be"/>
<circle cx="818" cy="338" r="4.3" fill="#3628be"/>
<circle cx="847" cy="341" r="4.3" fill="#3628be"/>
<circle cx="880.5" cy="347" r="4.3" fill="#3628be"/>
<circle cx="625.5" cy="341" r="4.3" fill="#3628be"/>
<circle cx="684.5" cy="360" r="4.3" fill="#3628be"/>
<circle cx="704.5" cy="373" r="4.3" fill="#3628be"/>
<circle cx="758.5" cy="359" r="4.3" fill="#3628be"/>
<circle cx="787.5" cy="385" r="4.3" fill="#3628be"/>
<circle cx="792.5" cy="401" r="4.3" fill="#3628be"/>
<circle cx="767.5" cy="412" r="4.3" fill="#3628be"/>
<circle cx="818.5" cy="415.5" r="4.3" fill="#3628be"/>
<circle cx="848" cy="415" r="4.3" fill="#3628be"/>
<circle cx="868" cy="408" r="4.3" fill="#3628be"/>
<circle cx="835" cy="430.5" r="4.3" fill="#3628be"/>
<circle cx="855" cy="436.5" r="4.3" fill="#3628be"/>
<circle cx="865.5" cy="438" r="4.3" fill="#3628be"/>
<circle cx="844" cy="443" r="4.3" fill="#3628be"/>
<circle cx="769.5" cy="441" r="4.3" fill="#3628be"/>
<circle cx="764.5" cy="285" r="4.3" fill="#d08029"/>
<circle cx="941" cy="255" r="4.3" fill="#d08029"/>
<circle cx="831" cy="408" r="4.3" fill="#d08029"/>
<circle cx="728.5" cy="350" r="4.3" fill="#3cc894"/>
<circle cx="767.5" cy="384" r="4.3" fill="#3cc894"/>
<circle cx="731.5" cy="400" r="4.3" fill="#3cc894"/>
<circle cx="753.5" cy="405" r="4.3" fill="#3cc894"/>
<circle cx="812.5" cy="375" r="4.3" fill="#3cc894"/>
<circle cx="865.5" cy="372" r="4.3" fill="#3cc894"/>
<circle cx="942" cy="319" r="4.3" fill="#3cc894"/>
<circle cx="699.5" cy="419" r="4.3" fill="#3ec733"/>
<circle cx="753.5" cy="473" r="4.3" fill="#3628be"/>
<circle cx="652.5" cy="590" r="4.3" fill="#3628be"/>
<circle cx="657.5" cy="602" r="4.3" fill="#3628be"/>
<circle cx="679.5" cy="667" r="4.3" fill="#3628be"/>
<circle cx="842" cy="467" r="4.3" fill="#2481b0"/>
<circle cx="839" cy="474" r="4.3" fill="#2481b0"/>
<circle cx="798.5" cy="479" r="4.3" fill="#2481b0"/>
<circle cx="758.5" cy="504" r="4.3" fill="#2481b0"/>
<circle cx="734" cy="515" r="4.3" fill="#2481b0"/>
<circle cx="595" cy="605" r="4.3" fill="#2481b0"/>
<circle cx="692.5" cy="494" r="4.3" fill="#3cc894"/>
<circle cx="818.5" cy="498" r="4.3" fill="#3cc894"/>
<circle cx="825.5" cy="513" r="4.3" fill="#3cc894"/>
<circle cx="712.5" cy="526" r="4.3" fill="#3cc894"/>
<circle cx="797.5" cy="538" r="4.3" fill="#3cc894"/>
<circle cx="939.5" cy="566" r="4.3" fill="#3cc894"/>
<circle cx="705.5" cy="589" r="4.3" fill="#3cc894"/>
<circle cx="768.5" cy="595" r="4.3" fill="#3cc894"/>
<circle cx="672.5" cy="628" r="4.3" fill="#3cc894"/>
<circle cx="641.5" cy="644.5" r="4.3" fill="#3cc894"/>
<circle cx="607.5" cy="519" r="4.3" fill="#3ec733"/>
<circle cx="616.5" cy="658.5" r="4.3" fill="#3ec733"/>
<circle cx="482" cy="677" r="4.3" fill="#3628be"/>
<circle cx="544.5" cy="677" r="4.3" fill="#3628be"/>
<circle cx="582.5" cy="708" r="4.3" fill="#3628be"/>
<circle cx="534.5" cy="748" r="4.3" fill="#3628be"/>
<circle cx="610.5" cy="781" r="4.3" fill="#3628be"/>
<circle cx="570.5" cy="801" r="4.3" fill="#3628be"/>
<circle cx="648.5" cy="668" r="4.3" fill="#3ec733"/>
<circle cx="615.5" cy="681" r="4.3" fill="#3ec733"/>
<circle cx="638.5" cy="695" r="4.3" fill="#3ec733"/>
<circle cx="612.5" cy="703" r="4.3" fill="#3ec733"/>
<circle cx="482" cy="740" r="4.3" fill="#3ec733"/>
<circle cx="607.5" cy="850" r="4.3" fill="#3ec733"/>
<circle cx="647.5" cy="728" r="4.3" fill="#3cc894"/>
<circle cx="522.5" cy="761" r="4.3" fill="#3cc894"/>
<circle cx="361" cy="680" r="4.3" fill="#3ec733"/>
<circle cx="403" cy="682" r="4.3" fill="#3628be"/>
<circle cx="452.7" cy="687" r="4.3" fill="#3628be"/>
<circle cx="418" cy="708" r="4.3" fill="#3628be"/>
<circle cx="461.7" cy="796" r="4.3" fill="#3ec733"/>
<circle cx="1050.5" cy="245" r="4.3" fill="#d08029"/>
<circle cx="1009" cy="268" r="4.3" fill="#d08029"/>
<circle cx="1088.5" cy="262" r="4.3" fill="#d08029"/>
<circle cx="1035.5" cy="319" r="4.3" fill="#d08029"/>
<circle cx="1040.5" cy="457" r="4.3" fill="#d08029"/>
<circle cx="1024.5" cy="246" r="4.3" fill="#3cc894"/>
<circle cx="1071.5" cy="297" r="4.3" fill="#3cc894"/>
<circle cx="1003.5" cy="332" r="4.3" fill="#3cc894"/>
<circle cx="970.5" cy="351" r="4.3" fill="#3cc894"/>
<circle cx="1116.5" cy="392" r="4.3" fill="#3cc894"/>
<circle cx="1115.5" cy="242" r="4.3" fill="#3ec733"/>
<circle cx="986.5" cy="308" r="4.3" fill="#3ec733"/>
<circle cx="1082.5" cy="435" r="4.3" fill="#3ec733"/>
<circle cx="1208.5" cy="444.5" r="4.3" fill="#3ec733"/>
<circle cx="1356.5" cy="358" r="4.3" fill="#3ec733"/>
<circle cx="1396" cy="372" r="4.3" fill="#3ec733"/>
<circle cx="1339" cy="384" r="4.3" fill="#3ec733"/>
<circle cx="1291" cy="393" r="4.3" fill="#3ec733"/>
<circle cx="1309" cy="394.5" r="4.3" fill="#3ec733"/>
<circle cx="1279.5" cy="417" r="4.3" fill="#3ec733"/>
<circle cx="1327" cy="416" r="4.3" fill="#3ec733"/>
<circle cx="1368" cy="418" r="4.3" fill="#3ec733"/>
<circle cx="1415.5" cy="403" r="4.3" fill="#3ec733"/>
<circle cx="1329" cy="457" r="4.3" fill="#3ec733"/>
<circle cx="1042.5" cy="72" r="4.3" fill="#d08029"/>
<circle cx="1322" cy="127" r="4.3" fill="#3ec733"/>
<circle cx="1266" cy="153" r="4.3" fill="#3cc894"/>
<circle cx="1167.5" cy="166" r="4.3" fill="#3cc894"/>
<circle cx="1223.5" cy="190" r="4.3" fill="#3ec733"/>
<circle cx="1180.5" cy="472" r="4.3" fill="#3ec733"/>
<circle cx="1229.5" cy="476" r="4.3" fill="#3ec733"/>
<circle cx="1276" cy="477" r="4.3" fill="#3ec733"/>
<circle cx="1390" cy="474" r="4.3" fill="#3ec733"/>
<circle cx="1192" cy="495" r="4.3" fill="#3ec733"/>
<circle cx="1163.5" cy="499" r="4.3" fill="#3ec733"/>
<circle cx="1340" cy="497" r="4.3" fill="#3ec733"/>
<circle cx="1383" cy="499" r="4.3" fill="#3ec733"/>
<circle cx="1073.5" cy="512" r="4.3" fill="#3ec733"/>
<circle cx="1166.5" cy="513" r="4.3" fill="#3ec733"/>
<circle cx="1220.5" cy="509" r="4.3" fill="#3ec733"/>
<circle cx="1300" cy="511" r="4.3" fill="#3ec733"/>
<circle cx="1415.5" cy="522" r="4.3" fill="#3ec733"/>
<circle cx="1337" cy="527" r="4.3" fill="#3ec733"/>
<circle cx="1391" cy="526" r="4.3" fill="#3ec733"/>
<circle cx="1201" cy="533" r="4.3" fill="#3ec733"/>
<circle cx="1166.5" cy="537" r="4.3" fill="#3ec733"/>
<circle cx="1310" cy="534" r="4.3" fill="#3ec733"/>
<circle cx="1248" cy="540" r="4.3" fill="#3ec733"/>
<circle cx="1358" cy="545.5" r="4.3" fill="#3ec733"/>
<circle cx="1293" cy="550" r="4.3" fill="#3ec733"/>
<circle cx="1059.5" cy="553" r="4.3" fill="#3ec733"/>
<circle cx="1081.5" cy="556" r="4.3" fill="#3ec733"/>
<circle cx="1100.5" cy="560" r="4.3" fill="#3ec733"/>
<circle cx="1144.5" cy="555" r="4.3" fill="#3ec733"/>
<circle cx="1233" cy="553" r="4.3" fill="#3ec733"/>
<circle cx="1274" cy="556" r="4.3" fill="#3ec733"/>
<circle cx="1196" cy="557" r="4.3" fill="#3ec733"/>
<circle cx="1182" cy="566" r="4.3" fill="#3ec733"/>
<circle cx="1165.5" cy="569" r="4.3" fill="#3ec733"/>
<circle cx="1059.5" cy="572" r="4.3" fill="#3ec733"/>
<circle cx="1149.5" cy="576" r="4.3" fill="#3ec733"/>
<circle cx="1257" cy="580" r="4.3" fill="#3ec733"/>
<circle cx="1288" cy="583" r="4.3" fill="#3ec733"/>
<circle cx="1203" cy="584" r="4.3" fill="#3ec733"/>
<circle cx="1216.5" cy="587" r="4.3" fill="#3ec733"/>
<circle cx="1231.5" cy="586" r="4.3" fill="#3ec733"/>
<circle cx="1130.5" cy="591" r="4.3" fill="#3ec733"/>
<circle cx="1188" cy="593" r="4.3" fill="#3ec733"/>
<circle cx="1171" cy="596" r="4.3" fill="#3ec733"/>
<circle cx="1048.5" cy="616" r="4.3" fill="#3ec733"/>
<circle cx="1110.5" cy="620" r="4.3" fill="#3ec733"/>
<circle cx="1145.5" cy="499" r="4.3" fill="#d08029"/>
<circle cx="1109.5" cy="511" r="4.3" fill="#d08029"/>
<circle cx="1105.5" cy="531" r="4.3" fill="#d08029"/>
<circle cx="1062.5" cy="535" r="4.3" fill="#d08029"/>
<circle cx="1123.5" cy="552" r="4.3" fill="#d08029"/>
<circle cx="1336" cy="560" r="4.3" fill="#d08029"/>
<circle cx="1304" cy="570" r="4.3" fill="#d08029"/>
<circle cx="1247" cy="574" r="4.3" fill="#d08029"/>
<circle cx="1061.5" cy="590" r="4.3" fill="#d08029"/>
<circle cx="1109.5" cy="591" r="4.3" fill="#d08029"/>
<circle cx="1083.5" cy="597" r="4.3" fill="#d08029"/>
<circle cx="1148.5" cy="603" r="4.3" fill="#d08029"/>
<circle cx="1090.5" cy="663" r="4.3" fill="#3cc894"/>
</g>
<circle cx="366.7" cy="311.7" r="5.6" fill="none" stroke="#e08a2a" stroke-width="1.2"/><circle cx="366.7" cy="311.7" r="4.3" fill="#3628be" stroke="#000" stroke-width="1.1"/>
</svg>
<div class="mbtn" style="left:15px;top:15px"><svg width="32" height="32" viewBox="0 0 32 32" fill="none" stroke="#c8c8c8" stroke-width="1"><path d="M23.5 16.5 16 9l-1.5 1.5V9.5h-2v3l-3 4M21.5 15v8h-4v-5h-3v5h-4v-8"/></svg></div>
<div class="mbtn" style="left:15px;top:57px;height:64px"><svg width="32" height="64" viewBox="0 0 32 64" fill="none" stroke="#c8c8c8" stroke-width="1"><path d="M8.5 16.5h15M16 9v15M8.5 48.5h15"/><path d="M0 32.5h32" stroke="#4a4a4a"/></svg></div>
<div id="search"><div class="sb"><svg width="32" height="32" viewBox="0 0 32 32" fill="none" stroke="#c8c8c8" stroke-width="1.2"><circle cx="14" cy="14" r="5"/><path d="M17.7 17.7 23.5 23.5"/></svg></div></div>
<div class="mbtn" style="left:1370px;top:15px"><svg width="32" height="32" viewBox="0 0 32 32" fill="none" stroke="#c8c8c8" stroke-width="1.1"><path d="M9.5 9.5 16 16l-6.5 6.5M15.5 9.5 22 16l-6.5 6.5"/></svg></div>
<div id="scale">6 mi</div>
<div id="attr"><span class="l">Esri, CGIAR, USGS | NYC OpenData, New Jersey Office of GIS, Esri, HERE, Garmin, SafeGraph, FAO, METI/NASA, USGS, EPA, NPS</span><span class="r">Powered by <b>Esri</b></span></div>
<div id="popup"><div class="ptr"></div>
<div class="act"><svg width="18" height="18" viewBox="0 0 18 18" style="position:absolute;left:15px;top:16px" fill="none" stroke="#c4c4c4" stroke-width="1.1"><circle cx="7.5" cy="7.5" r="5.5"/><path d="M11.5 11.5 16.5 16.5M4.5 7.5h6M7.5 4.5v6"/></svg><span>Zoom to</span></div>
<h2>cities: Hopatcong</h2>
<svg width="16" height="14" viewBox="0 0 16 14" style="position:absolute;left:402px;top:66px" fill="none" stroke="#d0d0d0" stroke-width="1.1"><rect x=".5" y="1.5" width="14" height="11"/><path d="M10.5 1.5v11"/></svg>
<svg width="14" height="14" viewBox="0 0 14 14" style="position:absolute;left:433px;top:66px" fill="none" stroke="#d0d0d0" stroke-width="1.2"><path d="M1 1l12 12M13 1 1 13"/></svg>
<div id="ptab"><div><i>NAME</i><u>Hopatcong</u></div><div><i>CLASS</i><u>borough</u></div><div><i>ST</i><u>NJ</u></div><div><i>STFIPS</i><u>34</u></div><div><i>PLACEFIPS</i><u>32910</u></div><div><i>CAPITAL</i><u>No</u></div><div><i>POP_CLASS</i><u>6</u></div><div><i>POP2013</i><u>15,071</u></div></div>
<div id="psb"><div class="arr up" style="top:6px"></div><div class="th"></div><div class="arr dn" style="top:220px"></div></div>
</div>
</div>
<div id="panel">
<div id="phead"><div id="back"><svg width="32" height="32" viewBox="0 0 32 32" fill="none" stroke="#d8d8d8" stroke-width="1.1"><path d="M19.5 9.5 12.5 16.5l7 7"/></svg></div><b>Hopatcong</b></div>
<div class="fl" style="top:62px">NAME</div>
<div class="fi" style="top:84px">Hopatcong</div>
<div class="fl" style="top:128px">CLASS</div>
<div class="fl" style="top:194px">ST</div>
<div class="fi" style="top:216px">NJ</div>
<div class="fl" style="top:260px">STFIPS</div>
<div class="fi" style="top:282px">34</div>
<div class="fl" style="top:326px">PLACEFIPS</div>
<div class="fi" style="top:348px">32910</div>
<div class="fl" style="top:392px">CAPITAL</div>
<div class="fi" style="top:414px">No</div>
<div class="fl" style="top:458px">POP_CLASS</div>
<div class="fi" style="top:480px">6</div>
<div class="fl" style="top:524px">POP2013</div>
<div class="fi" style="top:546px">15071</div>
<div class="fl" style="top:590px">POP2010</div>
<div class="fi" style="top:612px">15147</div>
<div class="fl" style="top:656px">WHITE</div>
<div class="fi" style="top:678px">13794</div>
<div class="fl" style="top:722px">BLACK</div>
<div class="fi" style="top:744px">441</div>
<div class="fl" style="top:788px">AMERI_ES</div>
<div class="fi" style="top:810px">16</div>
<div class="fl" style="top:854px">ASIAN</div>
<div class="fi" style="top:876px">3</div>
<div id="sel"><span>borough</span><svg width="10" height="7" viewBox="0 0 10 7" style="position:absolute;right:13px;top:13px" fill="none" stroke="#cfcfcf" stroke-width="1.1"><path d="M1 1 5 5.5 9 1"/></svg></div>
<div id="dd"><div>No value</div><div>village</div><div>city (consolidated, balance)</div><div>town</div><div>unknown</div><div>Census Designated Place</div><div>city and borough</div><div class="hl">borough</div><div>city</div><div>municipality</div><div>city and county</div></div>
</div>
<div id="vsb"><div class="arr up" style="top:6px"></div><div class="th"></div><div class="arr dn" style="top:874px"></div></div>
<div id="nav">
<div class="ni" style="top:0"><svg width="16" height="16" viewBox="0 0 16 16" fill="none" stroke="#bdbdbd" stroke-width="1"><path d="M6 2.5h9M6 6.5h7M6 10.5h5M6 14.5h3"/><rect x="1.5" y="1.5" width="2" height="2"/><circle cx="2.5" cy="6.5" r="1"/><rect x="1.5" y="9.5" width="2" height="2"/><path d="M2.5 13.5l1 2h-2z"/></svg><span>Legend</span></div>
<div class="ni" style="top:48px"><svg width="16" height="16" viewBox="0 0 16 16" fill="none" stroke="#bdbdbd" stroke-width="1"><circle cx="8" cy="8" r="7"/><path d="M8 7v5M6.5 12h3M6.8 7H8"/><circle cx="8" cy="4.5" r=".4"/></svg><span>Details</span></div>
<div class="ni" style="top:96px"><svg width="16" height="16" viewBox="0 0 16 16" fill="none" stroke="#bdbdbd" stroke-width="1"><path d="M8 1.5 15 5.5 8 9.5 1 5.5zM1 8.5l7 4 7-4M1 11l7 4 7-4"/></svg><span>Layers</span></div>
<div class="ni on" style="top:144px"><svg width="16" height="16" viewBox="0 0 16 16" fill="none" stroke="#fff" stroke-width="1"><path d="M7 6 1 9.5l7 3.5 7-3.5-2.5-1.3M1 12l7 3.5 7-3.5M8 9.5l1-3 5-5 2 2-5 5z"/></svg><span>Edit</span></div>
<div class="ni" style="top:192px"><svg width="16" height="16" viewBox="0 0 16 16" fill="none" stroke="#bdbdbd" stroke-width="1"><path d="M1 1.5h14M2 1.5l4.5 6v7.5h3V7.5l4.5-6"/></svg><span>Filter</span></div>
<div class="ni" style="top:838px"><svg width="16" height="16" viewBox="0 0 16 16" fill="none" stroke="#9a9a9a" stroke-width="1.1"><path d="M2.5 3 7.5 8l-5 5M8.5 3l5 5-5 5"/></svg><span>Collapse</span></div>
</div>
<svg id="cursor" width="14" height="21" viewBox="0 0 14 21"><path d="M1 1v16l3.8-3.6 2.6 6 2.3-1-2.6-5.9H12.5z" fill="#fff" stroke="#000" stroke-width="1"/></svg>
</div>
</body>
</html>
